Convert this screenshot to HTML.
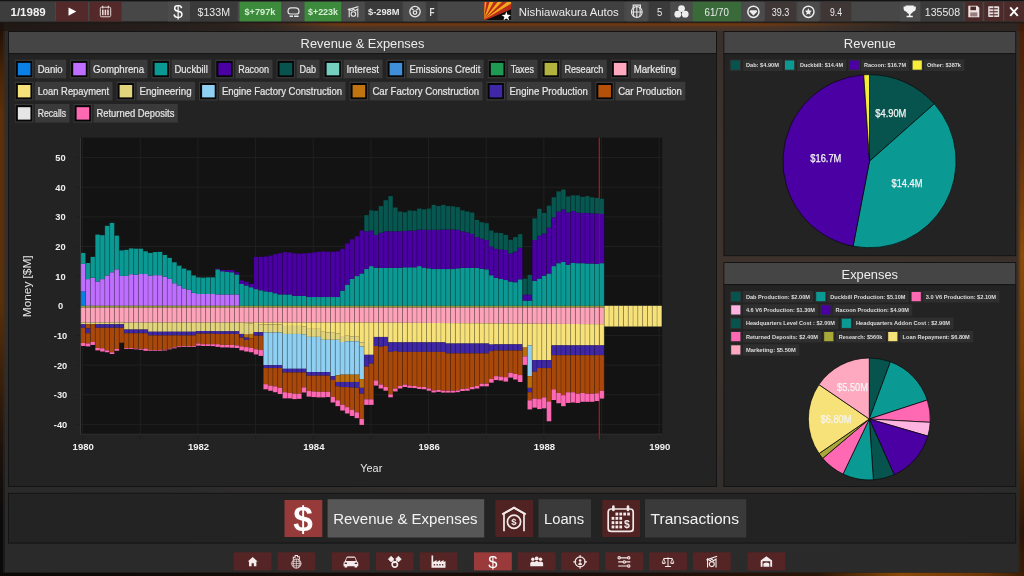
<!DOCTYPE html>
<html lang="en"><head><meta charset="utf-8"><title>Revenue &amp; Expenses</title>
<style>
html,body{margin:0;padding:0;background:#1a1208;overflow:hidden}
body{width:1024px;height:576px;font-family:'Liberation Sans', sans-serif}
svg{display:block;font-family:'Liberation Sans', sans-serif;will-change:transform;transform:translateZ(0)}
text{font-family:'Liberation Sans', sans-serif}
</style></head><body>
<svg width="1024" height="576" viewBox="0 0 1024 576">
<defs>
<radialGradient id="gFrame" gradientUnits="userSpaceOnUse" cx="0" cy="0" r="1" gradientTransform="translate(600,230) scale(900,380)">
<stop offset="0" stop-color="#3f332c"/><stop offset="0.5" stop-color="#3a302b"/><stop offset="0.68" stop-color="#332f2d"/><stop offset="0.82" stop-color="#2c2b2b"/><stop offset="1" stop-color="#2a2a2a"/>
</radialGradient>
<linearGradient id="gLeft" x1="0" y1="22" x2="0" y2="576" gradientUnits="userSpaceOnUse">
<stop offset="0" stop-color="#1c0e06"/><stop offset="0.1" stop-color="#4a2608"/><stop offset="0.17" stop-color="#5c300a"/><stop offset="0.5" stop-color="#5a300a"/><stop offset="0.77" stop-color="#1c120c"/><stop offset="0.9" stop-color="#0a0a0a"/><stop offset="1" stop-color="#0a0a0a"/>
</linearGradient>
<linearGradient id="gRight" x1="0" y1="22" x2="0" y2="576" gradientUnits="userSpaceOnUse">
<stop offset="0" stop-color="#4a1e08"/><stop offset="0.2" stop-color="#5e2e0a"/><stop offset="0.42" stop-color="#8a4a08"/><stop offset="0.7" stop-color="#6c3a04"/><stop offset="0.92" stop-color="#2a1406"/><stop offset="1" stop-color="#3a1c06"/>
</linearGradient>
<linearGradient id="gBot" x1="0" y1="0" x2="1024" y2="0" gradientUnits="userSpaceOnUse">
<stop offset="0" stop-color="#0a0908"/><stop offset="0.3" stop-color="#160c08"/><stop offset="0.6" stop-color="#1c0e08"/><stop offset="0.8" stop-color="#2a1608"/><stop offset="0.88" stop-color="#8a4a08"/><stop offset="0.96" stop-color="#6a3608"/><stop offset="1" stop-color="#3a1c06"/>
</linearGradient>
<linearGradient id="gTop" x1="0" y1="22" x2="0" y2="31" gradientUnits="userSpaceOnUse">
<stop offset="0" stop-color="#4a2206"/><stop offset="0.08" stop-color="#6e3a12"/><stop offset="0.36" stop-color="#693814"/><stop offset="0.55" stop-color="#4e3626" stop-opacity="0.95"/><stop offset="1" stop-color="#4a3428" stop-opacity="0.8"/>
</linearGradient>
<linearGradient id="gTopM" x1="0" y1="0" x2="1024" y2="0" gradientUnits="userSpaceOnUse">
<stop offset="0.18" stop-color="#fff" stop-opacity="0"/><stop offset="0.27" stop-color="#fff" stop-opacity="0.3"/><stop offset="0.335" stop-color="#fff" stop-opacity="1"/><stop offset="0.74" stop-color="#fff" stop-opacity="1"/><stop offset="0.81" stop-color="#fff" stop-opacity="0.5"/><stop offset="0.9" stop-color="#fff" stop-opacity="0"/>
</linearGradient>
<mask id="mTop" maskUnits="userSpaceOnUse" x="0" y="0" width="1024" height="40"><rect x="0" y="0" width="1024" height="40" fill="url(#gTopM)"/></mask>
<linearGradient id="gTL" x1="0" y1="0" x2="1024" y2="0" gradientUnits="userSpaceOnUse">
<stop offset="0" stop-color="#1c120e" stop-opacity="0.75"/><stop offset="0.22" stop-color="#1c120e" stop-opacity="0.45"/><stop offset="0.32" stop-color="#1c120e" stop-opacity="0"/><stop offset="0.8" stop-color="#1c120e" stop-opacity="0"/><stop offset="0.9" stop-color="#1c120e" stop-opacity="0.3"/><stop offset="1" stop-color="#2a1408" stop-opacity="0.3"/>
</linearGradient>
<linearGradient id="gShadow" x1="0" y1="0" x2="0" y2="1">
<stop offset="0" stop-color="#140a06" stop-opacity="0.95"/><stop offset="1" stop-color="#140a06" stop-opacity="0"/>
</linearGradient>
<linearGradient id="gEdgeL" x1="0" y1="0" x2="1" y2="0">
<stop offset="0" stop-color="#000" stop-opacity="0"/><stop offset="1" stop-color="#000" stop-opacity="0.0"/>
</linearGradient>
</defs>
<rect x="0" y="0" width="1024" height="576" fill="#0c0a08" />
<rect x="0" y="22" width="4" height="554" fill="url(#gLeft)" />
<rect x="1019.6" y="22" width="4.4" height="554" fill="url(#gRight)" />
<rect x="0" y="572.4" width="1024" height="3.6" fill="url(#gBot)" />
<rect x="3" y="22" width="1017.2" height="550.6" fill="url(#gFrame)" />
<rect x="2.5" y="22" width="2.5" height="550.6" fill="url(#gLeft)" opacity="0.45"/>
<rect x="1018.4" y="22" width="2.2" height="550.6" fill="url(#gRight)" opacity="0.5"/>
<rect x="0" y="22" width="1024" height="9" fill="url(#gTop)" mask="url(#mTop)"/>
<rect x="0" y="22" width="1024" height="9" fill="url(#gTL)"/>
<rect x="0" y="22" width="1024" height="2" fill="url(#gShadow)" opacity="0.6"/>
<rect x="300" y="22" width="560" height="3" fill="#5e2e10" opacity="0"/>
<rect x="0" y="0" width="1024" height="22.2" fill="#474747" />
<rect x="0" y="0" width="1024" height="1.4" fill="#141414" />
<rect x="0" y="21.4" width="1024" height="1.2" fill="#1c1a18" />
<rect x="0" y="1.8" width="55" height="19.6" fill="#3d3d3d" />
<text x="10.5" y="15.8" font-size="10.8" fill="#f2f2f2" text-anchor="start" font-weight="bold" textLength="35.3" lengthAdjust="spacingAndGlyphs" >1/1989</text>
<rect x="56" y="1.8" width="32" height="19.6" fill="#532929" />
<rect x="89.5" y="1.8" width="32" height="19.6" fill="#532929" />
<path d="M68.5 7.5 L76.3 11.6 L68.5 15.7 Z" fill="#fff"/>
<g fill="none" stroke="#e8d8d8" stroke-width="1"><rect x="100.3" y="7.2" width="10.4" height="9.6" rx="1.3"/><path d="M102.7 5.8v2.6M108.3 5.8v2.6" stroke-width="1.2"/></g>
<g fill="#e8d8d8"><rect x="102" y="9.6" width="1.6" height="5.6"/><rect x="104.6" y="9.6" width="1.6" height="5.6"/><rect x="107.2" y="9.6" width="1.6" height="5.6"/></g>
<rect x="168" y="1.8" width="22" height="19.6" fill="#4b4b4b" />
<text x="173.2" y="18.2" font-size="18.5" fill="#fff" text-anchor="start" font-weight="normal" textLength="9.6" lengthAdjust="spacingAndGlyphs" >$</text>
<rect x="190" y="1.8" width="47.5" height="19.6" fill="#3a3a3a" />
<text x="197.5" y="15.6" font-size="10.3" fill="#eaeaea" text-anchor="start" font-weight="normal" textLength="32.5" lengthAdjust="spacingAndGlyphs" >$133M</text>
<rect x="239.5" y="1.8" width="41.8" height="19.6" fill="#3c8a3c" />
<text x="244.5" y="14.9" font-size="9" fill="#d4efd4" text-anchor="start" font-weight="bold" textLength="31" lengthAdjust="spacingAndGlyphs" >$+797k</text>
<rect x="282.3" y="1.8" width="21.9" height="19.6" fill="#4b4b4b" />
<g fill="none" stroke="#e6e6e6" stroke-width="1.2"><path d="M288 11.6c0-2.600 1.600-3.800 3.200-3.800h4.200c2 0 3.600 1.400 3.600 3.600 0 1.600-1.200 2.600-2.600 2.600h-6.200c-1.400 0-2.200-1-2.200-2.400z"/><path d="M289.6 16.200h3.400M294 16.200h4.600" stroke-width="1.400"/></g>
<rect x="304.5" y="1.8" width="36.8" height="19.6" fill="#3c8a3c" />
<text x="308" y="14.9" font-size="9" fill="#d4efd4" text-anchor="start" font-weight="bold" textLength="30" lengthAdjust="spacingAndGlyphs" >$+223k</text>
<rect x="342.3" y="1.8" width="22.3" height="19.6" fill="#4b4b4b" />
<g fill="none" stroke="#e6e6e6" stroke-width="1.100"><path d="M349.2 17.200V9l2.400 1.800 1.800-1.800 1.800 1.800 2.600-1.800v8.200"/><path d="M347.8 9.800l10.600-3.200"/><circle cx="353.400" cy="14" r="2.300"/></g>
<rect x="365" y="1.8" width="37.5" height="19.6" fill="#3a3a3a" />
<text x="368" y="15.1" font-size="9.4" fill="#e6e6e6" text-anchor="start" font-weight="bold" textLength="31.5" lengthAdjust="spacingAndGlyphs" >$-298M</text>
<rect x="403.6" y="1.8" width="22" height="19.6" fill="#4b4b4b" />
<g fill="none" stroke="#e6e6e6" stroke-width="1.3"><circle cx="415" cy="11.6" r="5.2"/><circle cx="415" cy="12.6" r="1.8"/><path d="M411.5 8.4l2 1.6M418.5 8.4l-2 1.6"/></g>
<rect x="426.3" y="1.8" width="11.2" height="19.6" fill="#3a3a3a" />
<text x="429.6" y="15.6" font-size="10.6" fill="#e0e0e0" text-anchor="start" font-weight="bold" textLength="5" lengthAdjust="spacingAndGlyphs" >F</text>
<g><clipPath id="cf"><rect x="483.8" y="2" width="27.5" height="18"/></clipPath><g clip-path="url(#cf)"><rect x="483.8" y="2" width="27.5" height="18" fill="#0c0c0c"/><path d="M483.8 20 L483.8 2 L511.3 2 L511.3 6 Z" fill="#f2a81a"/><path d="M483.8 20 L486.5 2 L489.5 2 Z M483.8 20 L493.5 2 L497.5 2 Z M483.8 20 L502 2 L507 2 Z M483.8 20 L511.3 3.5 L511.3 8 Z" fill="#b82a1a"/><path d="M483.8 20 L483.8 2 L484.8 2 Z" fill="#b82a1a"/><path d="M483.8 20 L511.3 8.5 L511.3 20 Z" fill="#0c0c0c"/><path d="M483.8 20 L511.3 6.2 L511.3 9.2 L486 20 Z" fill="#b82a1a"/><path d="M506.3 11.5l1.2 3.3 3.5.1-2.8 2.1 1 3.4-2.9-2-2.9 2 1-3.4-2.8-2.1 3.5-.1z" fill="#fff"/></g></g>
<rect x="512.5" y="1.8" width="111.3" height="19.6" fill="#404040" />
<text x="518.8" y="15.6" font-size="11.3" fill="#eaeaea" text-anchor="start" font-weight="normal" textLength="100" lengthAdjust="spacingAndGlyphs" >Nishiawakura Autos</text>
<rect x="626.3" y="1.8" width="21.2" height="19.6" fill="#4b4b4b" />
<g fill="none" stroke="#e6e6e6" stroke-width="1.1"><circle cx="636.8" cy="12" r="5.4"/><path d="M631.4 12h10.8M636.8 6.6v10.8M634 7.2c-1 3-1 6.6 0 9.6M639.6 7.2c1 3 1 6.6 0 9.6"/><path d="M633.2 8.2v-3h7.2v3" stroke-width="1.2"/></g>
<rect x="648.8" y="1.8" width="21.2" height="19.6" fill="#3a3a3a" />
<text x="657" y="15.6" font-size="10.8" fill="#eaeaea" text-anchor="start" font-weight="normal" textLength="5.3" lengthAdjust="spacingAndGlyphs" >5</text>
<rect x="671" y="1.8" width="21" height="19.6" fill="#4b4b4b" />
<g fill="#eee"><circle cx="681.5" cy="8.6" r="3.4"/><circle cx="677.8" cy="14.2" r="3.4"/><circle cx="685.2" cy="14.2" r="3.4"/></g>
<rect x="692.5" y="1.8" width="48.8" height="19.6" fill="#3a6a3a" />
<text x="704.5" y="15.6" font-size="10.8" fill="#eaeaea" text-anchor="start" font-weight="normal" textLength="24.3" lengthAdjust="spacingAndGlyphs" >61/70</text>
<rect x="742.5" y="1.8" width="21.3" height="19.6" fill="#4b4b4b" />
<g fill="none" stroke="#eee" stroke-width="1.5"><circle cx="753.4" cy="11.8" r="5.6"/></g><path d="M750.4 10.2h6l1 1.4-4 3.8-4-3.8z" fill="#eee"/>
<rect x="765" y="1.8" width="31.3" height="19.6" fill="#3f3636" />
<text x="771.8" y="15.6" font-size="10.8" fill="#eaeaea" text-anchor="start" font-weight="normal" textLength="17.5" lengthAdjust="spacingAndGlyphs" >39.3</text>
<rect x="798" y="1.8" width="20.6" height="19.6" fill="#4b4b4b" />
<g fill="none" stroke="#eee" stroke-width="1.5"><circle cx="808.4" cy="11.8" r="5.6"/></g><path d="M808.4 8.3l1.05 2.2 2.4.3-1.75 1.65.45 2.4-2.15-1.2-2.15 1.2.45-2.4-1.75-1.65 2.4-.3z" fill="#eee"/>
<rect x="820.5" y="1.8" width="30.8" height="19.6" fill="#3f3636" />
<text x="830" y="15.6" font-size="10.8" fill="#eaeaea" text-anchor="start" font-weight="normal" textLength="12" lengthAdjust="spacingAndGlyphs" >9.4</text>
<rect x="900" y="1.8" width="20.5" height="19.6" fill="#4b4b4b" />
<path d="M905.6 5.6h8.2v1h2v2.2c0 1.6-1.2 2.6-2.6 2.8-.6 1.2-1.6 2-2.7 2.3v1.8h2.3v1.6h-6.2v-1.6h2.3v-1.8c-1.100-.3-2.100-1.100-2.700-2.300-1.400-.2-2.600-1.200-2.600-2.800v-2.200h2z" fill="#f2f2f2"/>
<rect x="920.5" y="1.8" width="43" height="19.6" fill="#3a3a3a" />
<text x="924.8" y="15.6" font-size="11.3" fill="#eaeaea" text-anchor="start" font-weight="normal" textLength="35.2" lengthAdjust="spacingAndGlyphs" >135508</text>
<rect x="964.8" y="1.8" width="17.7" height="19.6" fill="#4d2a2a" />
<rect x="984.3" y="1.8" width="18.7" height="19.6" fill="#4d2a2a" />
<rect x="1004.3" y="1.8" width="19.7" height="19.6" fill="#4d2a2a" />
<path d="M968.3 5.8h9l2 2v9.4h-11z" fill="#f0e4e4"/><rect x="970.4" y="6.6" width="5.6" height="3.6" fill="#4d2a2a"/><rect x="970.2" y="12.4" width="7.2" height="4" fill="#4d2a2a" opacity="0.55"/>
<g fill="#e9dcdc"><rect x="988.2" y="6.2" width="11" height="10.8" rx="0.8"/></g><g fill="#4d2a2a" opacity="0.8"><rect x="989.6" y="8" width="8.2" height="1.4"/><rect x="989.6" y="11" width="8.2" height="1.4"/><rect x="989.6" y="14" width="8.2" height="1.4"/><rect x="993.2" y="6.2" width="1" height="10.800"/></g>
<path d="M1010.2 7.3l7.600 8.600M1017.8 7.3l-7.600 8.600" stroke="#fff" stroke-width="1.9" fill="none"/>
<rect x="8" y="31" width="709" height="456" fill="#141414" />
<rect x="9" y="32" width="707" height="454" fill="#232323" />
<rect x="9" y="32" width="707" height="21" fill="#454545" />
<rect x="9" y="53" width="707" height="1.2" fill="#161616" />
<text x="362.5" y="47.6" font-size="13" fill="#ededed" text-anchor="middle" font-weight="normal" textLength="123.8" lengthAdjust="spacingAndGlyphs" >Revenue &amp; Expenses</text>
<rect x="723.4" y="31" width="292.8" height="225.2" fill="#141414" />
<rect x="724.4" y="32" width="290.8" height="223.2" fill="#232323" />
<rect x="724.4" y="32" width="290.8" height="21" fill="#454545" />
<rect x="724.4" y="53" width="290.8" height="1.2" fill="#161616" />
<text x="869.8" y="47.6" font-size="13" fill="#ededed" text-anchor="middle" font-weight="normal" textLength="52" lengthAdjust="spacingAndGlyphs" >Revenue</text>
<rect x="723.4" y="262" width="292.8" height="225" fill="#141414" />
<rect x="724.4" y="263" width="290.8" height="223" fill="#232323" />
<rect x="724.4" y="263" width="290.8" height="21" fill="#454545" />
<rect x="724.4" y="284" width="290.8" height="1.2" fill="#161616" />
<text x="869.8" y="278.6" font-size="13" fill="#ededed" text-anchor="middle" font-weight="normal" textLength="56.5" lengthAdjust="spacingAndGlyphs" >Expenses</text>
<rect x="8" y="492.8" width="1008.2" height="50.8" fill="#141414" />
<rect x="9" y="493.8" width="1006.2" height="48.8" fill="#232323" />
<rect x="14.85" y="59.7" width="18.6" height="18.6" fill="#3a3a3a" />
<rect x="15.75" y="60.9" width="16.4" height="16.2" fill="#060606" />
<rect x="17.85" y="62.9" width="12.6" height="12.4" fill="#0a7fe6" />
<rect x="34.85" y="59.7" width="31.25" height="18.6" fill="#3a3a3a" />
<text x="37.65" y="72.8" font-size="10.8" fill="#e6e6e6" text-anchor="start" font-weight="normal" textLength="25.05" lengthAdjust="spacingAndGlyphs" stroke="#e6e6e6" stroke-width="0.22">Danio</text>
<rect x="70.2" y="59.7" width="18.6" height="18.6" fill="#3a3a3a" />
<rect x="71.1" y="60.9" width="16.4" height="16.2" fill="#060606" />
<rect x="73.2" y="62.9" width="12.6" height="12.4" fill="#bf6fff" />
<rect x="90.2" y="59.7" width="57.3" height="18.6" fill="#3a3a3a" />
<text x="93" y="72.8" font-size="10.8" fill="#e6e6e6" text-anchor="start" font-weight="normal" textLength="51.1" lengthAdjust="spacingAndGlyphs" stroke="#e6e6e6" stroke-width="0.22">Gomphrena</text>
<rect x="151.6" y="59.7" width="18.6" height="18.6" fill="#3a3a3a" />
<rect x="152.5" y="60.9" width="16.4" height="16.2" fill="#060606" />
<rect x="154.6" y="62.9" width="12.6" height="12.4" fill="#0b9994" />
<rect x="171.6" y="59.7" width="39.65" height="18.6" fill="#3a3a3a" />
<text x="174.4" y="72.8" font-size="10.8" fill="#e6e6e6" text-anchor="start" font-weight="normal" textLength="33.45" lengthAdjust="spacingAndGlyphs" stroke="#e6e6e6" stroke-width="0.22">Duckbill</text>
<rect x="215.35" y="59.7" width="18.6" height="18.6" fill="#3a3a3a" />
<rect x="216.25" y="60.9" width="16.4" height="16.2" fill="#060606" />
<rect x="218.35" y="62.9" width="12.6" height="12.4" fill="#4a00a2" />
<rect x="235.35" y="59.7" width="37.15" height="18.6" fill="#3a3a3a" />
<text x="238.15" y="72.8" font-size="10.8" fill="#e6e6e6" text-anchor="start" font-weight="normal" textLength="30.95" lengthAdjust="spacingAndGlyphs" stroke="#e6e6e6" stroke-width="0.22">Racoon</text>
<rect x="276.6" y="59.7" width="18.6" height="18.6" fill="#3a3a3a" />
<rect x="277.5" y="60.9" width="16.4" height="16.2" fill="#060606" />
<rect x="279.6" y="62.9" width="12.6" height="12.4" fill="#07544e" />
<rect x="296.6" y="59.7" width="22.9" height="18.6" fill="#3a3a3a" />
<text x="299.4" y="72.8" font-size="10.8" fill="#e6e6e6" text-anchor="start" font-weight="normal" textLength="16.7" lengthAdjust="spacingAndGlyphs" stroke="#e6e6e6" stroke-width="0.22">Dab</text>
<rect x="323.6" y="59.7" width="18.6" height="18.6" fill="#3a3a3a" />
<rect x="324.5" y="60.9" width="16.4" height="16.2" fill="#060606" />
<rect x="326.6" y="62.9" width="12.6" height="12.4" fill="#74cfbf" />
<rect x="343.6" y="59.7" width="38.9" height="18.6" fill="#3a3a3a" />
<text x="346.4" y="72.8" font-size="10.8" fill="#e6e6e6" text-anchor="start" font-weight="normal" textLength="32.7" lengthAdjust="spacingAndGlyphs" stroke="#e6e6e6" stroke-width="0.22">Interest</text>
<rect x="386.6" y="59.7" width="18.6" height="18.6" fill="#3a3a3a" />
<rect x="387.5" y="60.9" width="16.4" height="16.2" fill="#060606" />
<rect x="389.6" y="62.9" width="12.6" height="12.4" fill="#3f8fd8" />
<rect x="406.6" y="59.7" width="77.15" height="18.6" fill="#3a3a3a" />
<text x="409.4" y="72.8" font-size="10.8" fill="#e6e6e6" text-anchor="start" font-weight="normal" textLength="70.95" lengthAdjust="spacingAndGlyphs" stroke="#e6e6e6" stroke-width="0.22">Emissions Credit</text>
<rect x="487.85" y="59.7" width="18.6" height="18.6" fill="#3a3a3a" />
<rect x="488.75" y="60.9" width="16.4" height="16.2" fill="#060606" />
<rect x="490.85" y="62.9" width="12.6" height="12.4" fill="#1f9a52" />
<rect x="507.85" y="59.7" width="29.65" height="18.6" fill="#3a3a3a" />
<text x="510.65" y="72.8" font-size="10.8" fill="#e6e6e6" text-anchor="start" font-weight="normal" textLength="23.45" lengthAdjust="spacingAndGlyphs" stroke="#e6e6e6" stroke-width="0.22">Taxes</text>
<rect x="541.6" y="59.7" width="18.6" height="18.6" fill="#3a3a3a" />
<rect x="542.5" y="60.9" width="16.4" height="16.2" fill="#060606" />
<rect x="544.6" y="62.9" width="12.6" height="12.4" fill="#b2b23e" />
<rect x="561.6" y="59.7" width="45.15" height="18.6" fill="#3a3a3a" />
<text x="564.4" y="72.8" font-size="10.8" fill="#e6e6e6" text-anchor="start" font-weight="normal" textLength="38.95" lengthAdjust="spacingAndGlyphs" stroke="#e6e6e6" stroke-width="0.22">Research</text>
<rect x="610.85" y="59.7" width="18.6" height="18.6" fill="#3a3a3a" />
<rect x="611.75" y="60.9" width="16.4" height="16.2" fill="#060606" />
<rect x="613.85" y="62.9" width="12.6" height="12.4" fill="#ffa9c0" />
<rect x="630.85" y="59.7" width="48.75" height="18.6" fill="#3a3a3a" />
<text x="633.65" y="72.8" font-size="10.8" fill="#e6e6e6" text-anchor="start" font-weight="normal" textLength="42.55" lengthAdjust="spacingAndGlyphs" stroke="#e6e6e6" stroke-width="0.22">Marketing</text>
<rect x="14.85" y="81.8" width="18.6" height="18.6" fill="#3a3a3a" />
<rect x="15.75" y="83" width="16.4" height="16.2" fill="#060606" />
<rect x="17.85" y="85" width="12.6" height="12.4" fill="#f7e27a" />
<rect x="34.85" y="81.8" width="77.65" height="18.6" fill="#3a3a3a" />
<text x="37.65" y="94.9" font-size="10.8" fill="#e6e6e6" text-anchor="start" font-weight="normal" textLength="71.45" lengthAdjust="spacingAndGlyphs" stroke="#e6e6e6" stroke-width="0.22">Loan Repayment</text>
<rect x="116.6" y="81.8" width="18.6" height="18.6" fill="#3a3a3a" />
<rect x="117.5" y="83" width="16.4" height="16.2" fill="#060606" />
<rect x="119.6" y="85" width="12.6" height="12.4" fill="#e2d47c" />
<rect x="136.6" y="81.8" width="58.4" height="18.6" fill="#3a3a3a" />
<text x="139.4" y="94.9" font-size="10.8" fill="#e6e6e6" text-anchor="start" font-weight="normal" textLength="52.2" lengthAdjust="spacingAndGlyphs" stroke="#e6e6e6" stroke-width="0.22">Engineering</text>
<rect x="199.1" y="81.8" width="18.6" height="18.6" fill="#3a3a3a" />
<rect x="200" y="83" width="16.4" height="16.2" fill="#060606" />
<rect x="202.1" y="85" width="12.6" height="12.4" fill="#8fd0f2" />
<rect x="219.1" y="81.8" width="126.4" height="18.6" fill="#3a3a3a" />
<text x="221.9" y="94.9" font-size="10.8" fill="#e6e6e6" text-anchor="start" font-weight="normal" textLength="120.2" lengthAdjust="spacingAndGlyphs" stroke="#e6e6e6" stroke-width="0.22">Engine Factory Construction</text>
<rect x="349.6" y="81.8" width="18.6" height="18.6" fill="#3a3a3a" />
<rect x="350.5" y="83" width="16.4" height="16.2" fill="#060606" />
<rect x="352.6" y="85" width="12.6" height="12.4" fill="#bf7410" />
<rect x="369.6" y="81.8" width="112.9" height="18.6" fill="#3a3a3a" />
<text x="372.4" y="94.9" font-size="10.8" fill="#e6e6e6" text-anchor="start" font-weight="normal" textLength="106.7" lengthAdjust="spacingAndGlyphs" stroke="#e6e6e6" stroke-width="0.22">Car Factory Construction</text>
<rect x="486.6" y="81.8" width="18.6" height="18.6" fill="#3a3a3a" />
<rect x="487.5" y="83" width="16.4" height="16.2" fill="#060606" />
<rect x="489.6" y="85" width="12.6" height="12.4" fill="#3f27a5" />
<rect x="506.6" y="81.8" width="84.65" height="18.6" fill="#3a3a3a" />
<text x="509.4" y="94.9" font-size="10.8" fill="#e6e6e6" text-anchor="start" font-weight="normal" textLength="78.45" lengthAdjust="spacingAndGlyphs" stroke="#e6e6e6" stroke-width="0.22">Engine Production</text>
<rect x="595.35" y="81.8" width="18.6" height="18.6" fill="#3a3a3a" />
<rect x="596.25" y="83" width="16.4" height="16.2" fill="#060606" />
<rect x="598.35" y="85" width="12.6" height="12.4" fill="#b4500a" />
<rect x="615.35" y="81.8" width="69.95" height="18.6" fill="#3a3a3a" />
<text x="618.15" y="94.9" font-size="10.8" fill="#e6e6e6" text-anchor="start" font-weight="normal" textLength="63.75" lengthAdjust="spacingAndGlyphs" stroke="#e6e6e6" stroke-width="0.22">Car Production</text>
<rect x="14.85" y="104" width="18.6" height="18.6" fill="#3a3a3a" />
<rect x="15.75" y="105.2" width="16.4" height="16.2" fill="#060606" />
<rect x="17.85" y="107.2" width="12.6" height="12.4" fill="#e6e6e6" />
<rect x="34.85" y="104" width="34.65" height="18.6" fill="#3a3a3a" />
<text x="37.65" y="117.1" font-size="10.8" fill="#e6e6e6" text-anchor="start" font-weight="normal" textLength="28.45" lengthAdjust="spacingAndGlyphs" stroke="#e6e6e6" stroke-width="0.22">Recalls</text>
<rect x="73.6" y="104" width="18.6" height="18.6" fill="#3a3a3a" />
<rect x="74.5" y="105.2" width="16.4" height="16.2" fill="#060606" />
<rect x="76.6" y="107.2" width="12.6" height="12.4" fill="#ff69b4" />
<rect x="93.6" y="104" width="84.2" height="18.6" fill="#3a3a3a" />
<text x="96.4" y="117.1" font-size="10.8" fill="#e6e6e6" text-anchor="start" font-weight="normal" textLength="78" lengthAdjust="spacingAndGlyphs" stroke="#e6e6e6" stroke-width="0.22">Returned Deposits</text>
<rect x="80.6" y="137.7" width="581.6" height="296.7" fill="#131313" />
<rect x="82.1" y="137.7" width="1" height="302.7" fill="#202020" />
<rect x="139.76" y="137.7" width="1" height="302.7" fill="#202020" />
<rect x="197.42" y="137.7" width="1" height="302.7" fill="#202020" />
<rect x="255.08" y="137.7" width="1" height="302.7" fill="#202020" />
<rect x="312.74" y="137.7" width="1" height="302.7" fill="#202020" />
<rect x="370.4" y="137.7" width="1" height="302.7" fill="#202020" />
<rect x="428.06" y="137.7" width="1" height="302.7" fill="#202020" />
<rect x="485.72" y="137.7" width="1" height="302.7" fill="#202020" />
<rect x="543.38" y="137.7" width="1" height="302.7" fill="#202020" />
<rect x="601.04" y="137.7" width="1" height="302.7" fill="#202020" />
<rect x="658.7" y="137.7" width="1" height="302.7" fill="#202020" />
<rect x="75.6" y="423.9" width="586.6" height="1" fill="#202020" />
<rect x="75.6" y="394.25" width="586.6" height="1" fill="#202020" />
<rect x="75.6" y="364.6" width="586.6" height="1" fill="#202020" />
<rect x="75.6" y="334.95" width="586.6" height="1" fill="#202020" />
<rect x="75.6" y="305.3" width="586.6" height="1" fill="#202020" />
<rect x="75.6" y="275.65" width="586.6" height="1" fill="#202020" />
<rect x="75.6" y="246" width="586.6" height="1" fill="#202020" />
<rect x="75.6" y="216.35" width="586.6" height="1" fill="#202020" />
<rect x="75.6" y="186.7" width="586.6" height="1" fill="#202020" />
<rect x="75.6" y="157.05" width="586.6" height="1" fill="#202020" />
<rect x="80" y="137.7" width="1" height="296.7" fill="#363636" />
<rect x="80" y="433.7" width="582.2" height="1" fill="#303030" />
<rect x="598.8" y="137.7" width="1" height="301.7" fill="#b01616" />
<rect x="80.80" y="291.29" width="4.802" height="14.51" fill="#0a7fe6"/>
<rect x="80.80" y="263.90" width="4.802" height="27.39" fill="#bf6fff"/>
<rect x="80.80" y="252.92" width="4.802" height="10.99" fill="#0b9994"/>
<rect x="80.80" y="305.80" width="4.802" height="1.80" fill="#8f9a3c"/>
<rect x="80.80" y="307.60" width="4.802" height="14.90" fill="#fca2b9"/>
<rect x="80.80" y="322.50" width="4.802" height="1.78" fill="#e2d47c"/>
<rect x="80.80" y="324.28" width="4.802" height="3.52" fill="#3f27a5"/>
<rect x="80.80" y="327.79" width="4.802" height="15.23" fill="#a8480a"/>
<rect x="80.80" y="343.02" width="4.802" height="2.93" fill="#ff69b4"/>
<rect x="85.60" y="279.14" width="4.802" height="26.66" fill="#bf6fff"/>
<rect x="85.60" y="263.02" width="4.802" height="16.11" fill="#0b9994"/>
<rect x="85.60" y="305.80" width="4.802" height="1.80" fill="#8f9a3c"/>
<rect x="85.60" y="307.60" width="4.802" height="14.90" fill="#fca2b9"/>
<rect x="85.60" y="322.50" width="4.802" height="1.78" fill="#e2d47c"/>
<rect x="85.60" y="324.28" width="4.802" height="4.10" fill="#a8480a"/>
<rect x="85.60" y="328.38" width="4.802" height="4.83" fill="#3f27a5"/>
<rect x="85.60" y="333.21" width="4.802" height="10.25" fill="#a8480a"/>
<rect x="85.60" y="343.46" width="4.802" height="2.93" fill="#ff69b4"/>
<rect x="90.40" y="277.67" width="4.802" height="28.13" fill="#bf6fff"/>
<rect x="90.40" y="256.87" width="4.802" height="20.80" fill="#0b9994"/>
<rect x="90.40" y="305.80" width="4.802" height="1.80" fill="#8f9a3c"/>
<rect x="90.40" y="307.60" width="4.802" height="14.90" fill="#fca2b9"/>
<rect x="90.40" y="322.50" width="4.802" height="1.78" fill="#e2d47c"/>
<rect x="90.40" y="324.28" width="4.802" height="17.72" fill="#a8480a"/>
<rect x="90.40" y="342.00" width="4.802" height="2.93" fill="#ff69b4"/>
<rect x="95.21" y="281.48" width="4.802" height="24.32" fill="#bf6fff"/>
<rect x="95.21" y="234.61" width="4.802" height="46.87" fill="#0b9994"/>
<rect x="95.21" y="305.80" width="4.802" height="1.80" fill="#8f9a3c"/>
<rect x="95.21" y="307.60" width="4.802" height="14.90" fill="#fca2b9"/>
<rect x="95.21" y="322.50" width="4.802" height="1.78" fill="#e2d47c"/>
<rect x="95.21" y="324.28" width="4.802" height="3.52" fill="#3f27a5"/>
<rect x="95.21" y="327.79" width="4.802" height="20.07" fill="#a8480a"/>
<rect x="95.21" y="347.86" width="4.802" height="2.49" fill="#ff69b4"/>
<rect x="100.01" y="279.14" width="4.802" height="26.66" fill="#bf6fff"/>
<rect x="100.01" y="235.19" width="4.802" height="43.94" fill="#0b9994"/>
<rect x="100.01" y="305.80" width="4.802" height="1.80" fill="#8f9a3c"/>
<rect x="100.01" y="307.60" width="4.802" height="14.90" fill="#fca2b9"/>
<rect x="100.01" y="322.50" width="4.802" height="1.78" fill="#e2d47c"/>
<rect x="100.01" y="324.28" width="4.802" height="3.52" fill="#3f27a5"/>
<rect x="100.01" y="327.79" width="4.802" height="20.51" fill="#a8480a"/>
<rect x="100.01" y="348.30" width="4.802" height="3.22" fill="#ff69b4"/>
<rect x="104.81" y="275.48" width="4.802" height="30.32" fill="#bf6fff"/>
<rect x="104.81" y="225.82" width="4.802" height="49.66" fill="#0b9994"/>
<rect x="104.81" y="305.80" width="4.802" height="1.80" fill="#8f9a3c"/>
<rect x="104.81" y="307.60" width="4.802" height="14.90" fill="#fca2b9"/>
<rect x="104.81" y="322.50" width="4.802" height="1.78" fill="#e2d47c"/>
<rect x="104.81" y="324.28" width="4.802" height="3.52" fill="#3f27a5"/>
<rect x="104.81" y="327.79" width="4.802" height="22.56" fill="#a8480a"/>
<rect x="104.81" y="350.35" width="4.802" height="1.90" fill="#ff69b4"/>
<rect x="109.61" y="272.25" width="4.802" height="33.55" fill="#bf6fff"/>
<rect x="109.61" y="222.89" width="4.802" height="49.36" fill="#0b9994"/>
<rect x="109.61" y="305.80" width="4.802" height="1.80" fill="#8f9a3c"/>
<rect x="109.61" y="307.60" width="4.802" height="14.90" fill="#fca2b9"/>
<rect x="109.61" y="322.50" width="4.802" height="1.78" fill="#e2d47c"/>
<rect x="109.61" y="324.28" width="4.802" height="3.52" fill="#3f27a5"/>
<rect x="109.61" y="327.79" width="4.802" height="24.46" fill="#a8480a"/>
<rect x="109.61" y="352.25" width="4.802" height="1.76" fill="#ff69b4"/>
<rect x="114.41" y="269.32" width="4.802" height="36.48" fill="#bf6fff"/>
<rect x="114.41" y="235.63" width="4.802" height="33.69" fill="#0b9994"/>
<rect x="114.41" y="305.80" width="4.802" height="1.80" fill="#8f9a3c"/>
<rect x="114.41" y="307.60" width="4.802" height="14.90" fill="#fca2b9"/>
<rect x="114.41" y="322.50" width="4.802" height="1.78" fill="#e2d47c"/>
<rect x="114.41" y="324.28" width="4.802" height="3.52" fill="#3f27a5"/>
<rect x="114.41" y="327.79" width="4.802" height="21.24" fill="#a8480a"/>
<rect x="114.41" y="349.03" width="4.802" height="1.76" fill="#ff69b4"/>
<rect x="119.22" y="275.91" width="4.802" height="29.89" fill="#bf6fff"/>
<rect x="119.22" y="250.43" width="4.802" height="25.49" fill="#0b9994"/>
<rect x="119.22" y="305.80" width="4.802" height="1.80" fill="#8f9a3c"/>
<rect x="119.22" y="307.60" width="4.802" height="14.90" fill="#fca2b9"/>
<rect x="119.22" y="322.50" width="4.802" height="1.78" fill="#e2d47c"/>
<rect x="119.22" y="324.28" width="4.802" height="3.52" fill="#3f27a5"/>
<rect x="119.22" y="327.79" width="4.802" height="14.94" fill="#a8480a"/>
<rect x="124.02" y="275.91" width="4.802" height="29.89" fill="#bf6fff"/>
<rect x="124.02" y="249.84" width="4.802" height="26.07" fill="#0b9994"/>
<rect x="124.02" y="305.80" width="4.802" height="1.80" fill="#8f9a3c"/>
<rect x="124.02" y="307.60" width="4.802" height="14.90" fill="#fca2b9"/>
<rect x="124.02" y="322.50" width="4.802" height="7.05" fill="#e2d47c"/>
<rect x="124.02" y="329.55" width="4.802" height="3.66" fill="#3f27a5"/>
<rect x="124.02" y="333.21" width="4.802" height="14.94" fill="#a8480a"/>
<rect x="124.02" y="348.15" width="4.802" height="0.88" fill="#ff69b4"/>
<rect x="128.82" y="274.16" width="4.802" height="31.64" fill="#bf6fff"/>
<rect x="128.82" y="248.38" width="4.802" height="25.78" fill="#0b9994"/>
<rect x="128.82" y="305.80" width="4.802" height="1.80" fill="#8f9a3c"/>
<rect x="128.82" y="307.60" width="4.802" height="14.90" fill="#fca2b9"/>
<rect x="128.82" y="322.50" width="4.802" height="7.05" fill="#e2d47c"/>
<rect x="128.82" y="329.55" width="4.802" height="3.66" fill="#3f27a5"/>
<rect x="128.82" y="333.21" width="4.802" height="14.94" fill="#a8480a"/>
<rect x="128.82" y="348.15" width="4.802" height="0.88" fill="#ff69b4"/>
<rect x="133.62" y="274.74" width="4.802" height="31.06" fill="#bf6fff"/>
<rect x="133.62" y="248.67" width="4.802" height="26.07" fill="#0b9994"/>
<rect x="133.62" y="305.80" width="4.802" height="1.80" fill="#8f9a3c"/>
<rect x="133.62" y="307.60" width="4.802" height="14.90" fill="#fca2b9"/>
<rect x="133.62" y="322.50" width="4.802" height="7.05" fill="#e2d47c"/>
<rect x="133.62" y="329.55" width="4.802" height="3.66" fill="#3f27a5"/>
<rect x="133.62" y="333.21" width="4.802" height="15.38" fill="#a8480a"/>
<rect x="133.62" y="348.59" width="4.802" height="0.73" fill="#ff69b4"/>
<rect x="138.42" y="274.01" width="4.802" height="31.79" fill="#bf6fff"/>
<rect x="138.42" y="248.67" width="4.802" height="25.34" fill="#0b9994"/>
<rect x="138.42" y="305.80" width="4.802" height="1.80" fill="#8f9a3c"/>
<rect x="138.42" y="307.60" width="4.802" height="14.90" fill="#fca2b9"/>
<rect x="138.42" y="322.50" width="4.802" height="7.05" fill="#e2d47c"/>
<rect x="138.42" y="329.55" width="4.802" height="3.66" fill="#3f27a5"/>
<rect x="138.42" y="333.21" width="4.802" height="15.67" fill="#a8480a"/>
<rect x="138.42" y="348.88" width="4.802" height="0.88" fill="#ff69b4"/>
<rect x="143.23" y="274.01" width="4.802" height="31.79" fill="#bf6fff"/>
<rect x="143.23" y="251.31" width="4.802" height="22.70" fill="#0b9994"/>
<rect x="143.23" y="305.80" width="4.802" height="1.80" fill="#8f9a3c"/>
<rect x="143.23" y="307.60" width="4.802" height="14.90" fill="#fca2b9"/>
<rect x="143.23" y="322.50" width="4.802" height="7.05" fill="#e2d47c"/>
<rect x="143.23" y="329.55" width="4.802" height="3.66" fill="#3f27a5"/>
<rect x="143.23" y="333.21" width="4.802" height="15.38" fill="#a8480a"/>
<rect x="143.23" y="348.59" width="4.802" height="2.20" fill="#ff69b4"/>
<rect x="148.03" y="275.62" width="4.802" height="30.18" fill="#bf6fff"/>
<rect x="148.03" y="252.92" width="4.802" height="22.70" fill="#0b9994"/>
<rect x="148.03" y="305.80" width="4.802" height="1.80" fill="#8f9a3c"/>
<rect x="148.03" y="307.60" width="4.802" height="14.90" fill="#fca2b9"/>
<rect x="148.03" y="322.50" width="4.802" height="9.25" fill="#e2d47c"/>
<rect x="148.03" y="331.75" width="4.802" height="3.66" fill="#3f27a5"/>
<rect x="148.03" y="335.41" width="4.802" height="14.65" fill="#a8480a"/>
<rect x="148.03" y="350.06" width="4.802" height="0.73" fill="#ff69b4"/>
<rect x="152.83" y="275.18" width="4.802" height="30.62" fill="#bf6fff"/>
<rect x="152.83" y="252.04" width="4.802" height="23.14" fill="#0b9994"/>
<rect x="152.83" y="305.80" width="4.802" height="1.80" fill="#8f9a3c"/>
<rect x="152.83" y="307.60" width="4.802" height="14.90" fill="#fca2b9"/>
<rect x="152.83" y="322.50" width="4.802" height="9.25" fill="#e2d47c"/>
<rect x="152.83" y="331.75" width="4.802" height="3.66" fill="#3f27a5"/>
<rect x="152.83" y="335.41" width="4.802" height="14.65" fill="#a8480a"/>
<rect x="152.83" y="350.06" width="4.802" height="0.73" fill="#ff69b4"/>
<rect x="157.63" y="275.18" width="4.802" height="30.62" fill="#bf6fff"/>
<rect x="157.63" y="251.89" width="4.802" height="23.29" fill="#0b9994"/>
<rect x="157.63" y="305.80" width="4.802" height="1.80" fill="#8f9a3c"/>
<rect x="157.63" y="307.60" width="4.802" height="14.90" fill="#fca2b9"/>
<rect x="157.63" y="322.50" width="4.802" height="9.25" fill="#e2d47c"/>
<rect x="157.63" y="331.75" width="4.802" height="3.66" fill="#3f27a5"/>
<rect x="157.63" y="335.41" width="4.802" height="14.65" fill="#a8480a"/>
<rect x="157.63" y="350.06" width="4.802" height="0.73" fill="#ff69b4"/>
<rect x="162.43" y="276.65" width="4.802" height="29.15" fill="#bf6fff"/>
<rect x="162.43" y="254.97" width="4.802" height="21.68" fill="#0b9994"/>
<rect x="162.43" y="305.80" width="4.802" height="1.80" fill="#8f9a3c"/>
<rect x="162.43" y="307.60" width="4.802" height="14.90" fill="#fca2b9"/>
<rect x="162.43" y="322.50" width="4.802" height="9.25" fill="#e2d47c"/>
<rect x="162.43" y="331.75" width="4.802" height="3.66" fill="#3f27a5"/>
<rect x="162.43" y="335.41" width="4.802" height="14.35" fill="#a8480a"/>
<rect x="162.43" y="349.76" width="4.802" height="0.73" fill="#ff69b4"/>
<rect x="167.24" y="278.84" width="4.802" height="26.96" fill="#bf6fff"/>
<rect x="167.24" y="257.90" width="4.802" height="20.95" fill="#0b9994"/>
<rect x="167.24" y="305.80" width="4.802" height="1.80" fill="#8f9a3c"/>
<rect x="167.24" y="307.60" width="4.802" height="14.90" fill="#fca2b9"/>
<rect x="167.24" y="322.50" width="4.802" height="9.25" fill="#e2d47c"/>
<rect x="167.24" y="331.75" width="4.802" height="3.66" fill="#3f27a5"/>
<rect x="167.24" y="335.41" width="4.802" height="13.18" fill="#a8480a"/>
<rect x="167.24" y="348.59" width="4.802" height="0.73" fill="#ff69b4"/>
<rect x="172.04" y="283.24" width="4.802" height="22.56" fill="#bf6fff"/>
<rect x="172.04" y="262.29" width="4.802" height="20.95" fill="#0b9994"/>
<rect x="172.04" y="305.80" width="4.802" height="1.80" fill="#8f9a3c"/>
<rect x="172.04" y="307.60" width="4.802" height="14.90" fill="#fca2b9"/>
<rect x="172.04" y="322.50" width="4.802" height="9.25" fill="#e2d47c"/>
<rect x="172.04" y="331.75" width="4.802" height="3.66" fill="#3f27a5"/>
<rect x="172.04" y="335.41" width="4.802" height="12.01" fill="#a8480a"/>
<rect x="172.04" y="347.42" width="4.802" height="0.88" fill="#ff69b4"/>
<rect x="176.84" y="285.44" width="4.802" height="20.36" fill="#bf6fff"/>
<rect x="176.84" y="265.66" width="4.802" height="19.77" fill="#0b9994"/>
<rect x="176.84" y="305.80" width="4.802" height="1.80" fill="#8f9a3c"/>
<rect x="176.84" y="307.60" width="4.802" height="14.90" fill="#fca2b9"/>
<rect x="176.84" y="322.50" width="4.802" height="9.25" fill="#e2d47c"/>
<rect x="176.84" y="331.75" width="4.802" height="3.66" fill="#3f27a5"/>
<rect x="176.84" y="335.41" width="4.802" height="10.84" fill="#a8480a"/>
<rect x="176.84" y="346.25" width="4.802" height="0.88" fill="#ff69b4"/>
<rect x="181.64" y="288.37" width="4.802" height="17.43" fill="#bf6fff"/>
<rect x="181.64" y="268.59" width="4.802" height="19.77" fill="#0b9994"/>
<rect x="181.64" y="305.80" width="4.802" height="1.80" fill="#8f9a3c"/>
<rect x="181.64" y="307.60" width="4.802" height="14.90" fill="#fca2b9"/>
<rect x="181.64" y="322.50" width="4.802" height="9.25" fill="#e2d47c"/>
<rect x="181.64" y="331.75" width="4.802" height="3.66" fill="#3f27a5"/>
<rect x="181.64" y="335.41" width="4.802" height="10.55" fill="#a8480a"/>
<rect x="181.64" y="345.95" width="4.802" height="0.88" fill="#ff69b4"/>
<rect x="186.44" y="289.83" width="4.802" height="15.97" fill="#bf6fff"/>
<rect x="186.44" y="270.35" width="4.802" height="19.48" fill="#0b9994"/>
<rect x="186.44" y="305.80" width="4.802" height="1.80" fill="#8f9a3c"/>
<rect x="186.44" y="307.60" width="4.802" height="14.90" fill="#fca2b9"/>
<rect x="186.44" y="322.50" width="4.802" height="9.25" fill="#e2d47c"/>
<rect x="186.44" y="331.75" width="4.802" height="3.66" fill="#3f27a5"/>
<rect x="186.44" y="335.41" width="4.802" height="10.55" fill="#a8480a"/>
<rect x="186.44" y="345.95" width="4.802" height="0.88" fill="#ff69b4"/>
<rect x="191.25" y="292.76" width="4.802" height="13.04" fill="#bf6fff"/>
<rect x="191.25" y="275.48" width="4.802" height="17.28" fill="#0b9994"/>
<rect x="191.25" y="305.80" width="4.802" height="1.80" fill="#8f9a3c"/>
<rect x="191.25" y="307.60" width="4.802" height="14.90" fill="#fca2b9"/>
<rect x="191.25" y="322.50" width="4.802" height="9.25" fill="#e2d47c"/>
<rect x="191.25" y="331.75" width="4.802" height="3.66" fill="#3f27a5"/>
<rect x="191.25" y="335.41" width="4.802" height="10.55" fill="#a8480a"/>
<rect x="191.25" y="345.95" width="4.802" height="0.88" fill="#ff69b4"/>
<rect x="196.05" y="294.00" width="4.802" height="11.80" fill="#bf6fff"/>
<rect x="196.05" y="277.38" width="4.802" height="16.62" fill="#0b9994"/>
<rect x="196.05" y="305.80" width="4.802" height="1.80" fill="#8f9a3c"/>
<rect x="196.05" y="307.60" width="4.802" height="14.90" fill="#fca2b9"/>
<rect x="196.05" y="322.50" width="4.802" height="8.51" fill="#e2d47c"/>
<rect x="196.05" y="331.01" width="4.802" height="2.64" fill="#3f27a5"/>
<rect x="196.05" y="333.65" width="4.802" height="9.81" fill="#a8480a"/>
<rect x="196.05" y="343.46" width="4.802" height="2.20" fill="#ff69b4"/>
<rect x="200.85" y="294.00" width="4.802" height="11.80" fill="#bf6fff"/>
<rect x="200.85" y="277.67" width="4.802" height="16.33" fill="#0b9994"/>
<rect x="200.85" y="305.80" width="4.802" height="1.80" fill="#8f9a3c"/>
<rect x="200.85" y="307.60" width="4.802" height="14.90" fill="#fca2b9"/>
<rect x="200.85" y="322.50" width="4.802" height="8.51" fill="#e2d47c"/>
<rect x="200.85" y="331.01" width="4.802" height="2.64" fill="#3f27a5"/>
<rect x="200.85" y="333.65" width="4.802" height="10.55" fill="#a8480a"/>
<rect x="200.85" y="344.20" width="4.802" height="1.76" fill="#ff69b4"/>
<rect x="205.65" y="294.00" width="4.802" height="11.80" fill="#bf6fff"/>
<rect x="205.65" y="277.38" width="4.802" height="16.62" fill="#0b9994"/>
<rect x="205.65" y="305.80" width="4.802" height="1.80" fill="#8f9a3c"/>
<rect x="205.65" y="307.60" width="4.802" height="14.90" fill="#fca2b9"/>
<rect x="205.65" y="322.50" width="4.802" height="8.51" fill="#e2d47c"/>
<rect x="205.65" y="331.01" width="4.802" height="2.64" fill="#3f27a5"/>
<rect x="205.65" y="333.65" width="4.802" height="10.55" fill="#a8480a"/>
<rect x="205.65" y="344.20" width="4.802" height="1.76" fill="#ff69b4"/>
<rect x="210.45" y="294.00" width="4.802" height="11.80" fill="#bf6fff"/>
<rect x="210.45" y="277.38" width="4.802" height="16.62" fill="#0b9994"/>
<rect x="210.45" y="305.80" width="4.802" height="1.80" fill="#8f9a3c"/>
<rect x="210.45" y="307.60" width="4.802" height="14.90" fill="#fca2b9"/>
<rect x="210.45" y="322.50" width="4.802" height="8.51" fill="#e2d47c"/>
<rect x="210.45" y="331.01" width="4.802" height="2.64" fill="#3f27a5"/>
<rect x="210.45" y="333.65" width="4.802" height="10.55" fill="#a8480a"/>
<rect x="210.45" y="344.20" width="4.802" height="1.90" fill="#ff69b4"/>
<rect x="215.26" y="294.40" width="4.802" height="11.40" fill="#bf6fff"/>
<rect x="215.26" y="269.32" width="4.802" height="25.08" fill="#0b9994"/>
<rect x="215.26" y="268.59" width="4.802" height="0.73" fill="#4a00a2"/>
<rect x="215.26" y="305.80" width="4.802" height="1.80" fill="#8f9a3c"/>
<rect x="215.26" y="307.60" width="4.802" height="14.90" fill="#fca2b9"/>
<rect x="215.26" y="322.50" width="4.802" height="8.81" fill="#e2d47c"/>
<rect x="215.26" y="331.31" width="4.802" height="2.64" fill="#3f27a5"/>
<rect x="215.26" y="333.94" width="4.802" height="10.25" fill="#a8480a"/>
<rect x="215.26" y="344.20" width="4.802" height="2.64" fill="#ff69b4"/>
<rect x="220.06" y="294.40" width="4.802" height="11.40" fill="#bf6fff"/>
<rect x="220.06" y="271.23" width="4.802" height="23.17" fill="#0b9994"/>
<rect x="220.06" y="270.06" width="4.802" height="1.17" fill="#4a00a2"/>
<rect x="220.06" y="305.80" width="4.802" height="1.80" fill="#8f9a3c"/>
<rect x="220.06" y="307.60" width="4.802" height="14.90" fill="#fca2b9"/>
<rect x="220.06" y="322.50" width="4.802" height="8.81" fill="#e2d47c"/>
<rect x="220.06" y="331.31" width="4.802" height="2.64" fill="#3f27a5"/>
<rect x="220.06" y="333.94" width="4.802" height="10.99" fill="#a8480a"/>
<rect x="220.06" y="344.93" width="4.802" height="2.49" fill="#ff69b4"/>
<rect x="224.86" y="294.40" width="4.802" height="11.40" fill="#bf6fff"/>
<rect x="224.86" y="271.81" width="4.802" height="22.59" fill="#0b9994"/>
<rect x="224.86" y="270.06" width="4.802" height="1.76" fill="#4a00a2"/>
<rect x="224.86" y="305.80" width="4.802" height="1.80" fill="#8f9a3c"/>
<rect x="224.86" y="307.60" width="4.802" height="14.90" fill="#fca2b9"/>
<rect x="224.86" y="322.50" width="4.802" height="8.81" fill="#e2d47c"/>
<rect x="224.86" y="331.31" width="4.802" height="2.64" fill="#3f27a5"/>
<rect x="224.86" y="333.94" width="4.802" height="10.99" fill="#a8480a"/>
<rect x="224.86" y="344.93" width="4.802" height="2.49" fill="#ff69b4"/>
<rect x="229.66" y="294.40" width="4.802" height="11.40" fill="#bf6fff"/>
<rect x="229.66" y="272.25" width="4.802" height="22.15" fill="#0b9994"/>
<rect x="229.66" y="270.06" width="4.802" height="2.20" fill="#4a00a2"/>
<rect x="229.66" y="305.80" width="4.802" height="1.80" fill="#8f9a3c"/>
<rect x="229.66" y="307.60" width="4.802" height="14.90" fill="#fca2b9"/>
<rect x="229.66" y="322.50" width="4.802" height="8.81" fill="#e2d47c"/>
<rect x="229.66" y="331.31" width="4.802" height="2.64" fill="#3f27a5"/>
<rect x="229.66" y="333.94" width="4.802" height="10.99" fill="#a8480a"/>
<rect x="229.66" y="344.93" width="4.802" height="2.78" fill="#ff69b4"/>
<rect x="234.46" y="294.40" width="4.802" height="11.40" fill="#bf6fff"/>
<rect x="234.46" y="274.45" width="4.802" height="19.95" fill="#0b9994"/>
<rect x="234.46" y="272.25" width="4.802" height="2.20" fill="#4a00a2"/>
<rect x="234.46" y="305.80" width="4.802" height="1.80" fill="#8f9a3c"/>
<rect x="234.46" y="307.60" width="4.802" height="14.90" fill="#fca2b9"/>
<rect x="234.46" y="322.50" width="4.802" height="8.81" fill="#e2d47c"/>
<rect x="234.46" y="331.31" width="4.802" height="2.64" fill="#3f27a5"/>
<rect x="234.46" y="333.94" width="4.802" height="11.43" fill="#a8480a"/>
<rect x="234.46" y="345.37" width="4.802" height="2.64" fill="#ff69b4"/>
<rect x="239.27" y="283.97" width="4.802" height="21.83" fill="#0b9994"/>
<rect x="239.27" y="280.31" width="4.802" height="3.66" fill="#4a00a2"/>
<rect x="239.27" y="305.80" width="4.802" height="1.80" fill="#8f9a3c"/>
<rect x="239.27" y="307.60" width="4.802" height="14.90" fill="#fca2b9"/>
<rect x="239.27" y="322.50" width="4.802" height="0.02" fill="#f7e27a"/>
<rect x="239.27" y="322.52" width="4.802" height="11.43" fill="#e2d47c"/>
<rect x="239.27" y="333.94" width="4.802" height="3.66" fill="#3f27a5"/>
<rect x="239.27" y="337.61" width="4.802" height="8.79" fill="#a8480a"/>
<rect x="239.27" y="346.39" width="4.802" height="3.95" fill="#ff69b4"/>
<rect x="244.07" y="285.44" width="4.802" height="20.36" fill="#0b9994"/>
<rect x="244.07" y="281.77" width="4.802" height="3.66" fill="#4a00a2"/>
<rect x="244.07" y="305.80" width="4.802" height="1.80" fill="#8f9a3c"/>
<rect x="244.07" y="307.60" width="4.802" height="14.90" fill="#fca2b9"/>
<rect x="244.07" y="322.50" width="4.802" height="0.60" fill="#f7e27a"/>
<rect x="244.07" y="323.10" width="4.802" height="11.57" fill="#e2d47c"/>
<rect x="244.07" y="334.68" width="4.802" height="2.93" fill="#ba6e0c"/>
<rect x="244.07" y="337.61" width="4.802" height="2.20" fill="#3f27a5"/>
<rect x="244.07" y="339.80" width="4.802" height="7.32" fill="#a8480a"/>
<rect x="244.07" y="347.13" width="4.802" height="4.39" fill="#ff69b4"/>
<rect x="248.87" y="287.19" width="4.802" height="18.61" fill="#0b9994"/>
<rect x="248.87" y="283.97" width="4.802" height="3.22" fill="#4a00a2"/>
<rect x="248.87" y="305.80" width="4.802" height="1.80" fill="#8f9a3c"/>
<rect x="248.87" y="307.60" width="4.802" height="14.90" fill="#fca2b9"/>
<rect x="248.87" y="322.50" width="4.802" height="0.90" fill="#f7e27a"/>
<rect x="248.87" y="323.40" width="4.802" height="10.55" fill="#e2d47c"/>
<rect x="248.87" y="333.94" width="4.802" height="4.39" fill="#ba6e0c"/>
<rect x="248.87" y="338.34" width="4.802" height="9.52" fill="#a8480a"/>
<rect x="248.87" y="347.86" width="4.802" height="4.39" fill="#ff69b4"/>
<rect x="253.67" y="289.10" width="4.802" height="16.70" fill="#0b9994"/>
<rect x="253.67" y="256.87" width="4.802" height="32.22" fill="#4a00a2"/>
<rect x="253.67" y="305.80" width="4.802" height="1.80" fill="#8f9a3c"/>
<rect x="253.67" y="307.60" width="4.802" height="14.90" fill="#fca2b9"/>
<rect x="253.67" y="322.50" width="4.802" height="1.48" fill="#f7e27a"/>
<rect x="253.67" y="323.98" width="4.802" height="8.20" fill="#e2d47c"/>
<rect x="253.67" y="332.19" width="4.802" height="3.52" fill="#3f27a5"/>
<rect x="253.67" y="335.70" width="4.802" height="13.62" fill="#a8480a"/>
<rect x="253.67" y="349.32" width="4.802" height="5.13" fill="#ff69b4"/>
<rect x="258.47" y="290.27" width="4.802" height="15.53" fill="#0b9994"/>
<rect x="258.47" y="256.87" width="4.802" height="33.40" fill="#4a00a2"/>
<rect x="258.47" y="305.80" width="4.802" height="1.80" fill="#8f9a3c"/>
<rect x="258.47" y="307.60" width="4.802" height="14.90" fill="#fca2b9"/>
<rect x="258.47" y="322.50" width="4.802" height="1.78" fill="#f7e27a"/>
<rect x="258.47" y="324.28" width="4.802" height="7.91" fill="#e2d47c"/>
<rect x="258.47" y="332.19" width="4.802" height="3.52" fill="#3f27a5"/>
<rect x="258.47" y="335.70" width="4.802" height="14.35" fill="#a8480a"/>
<rect x="258.47" y="350.06" width="4.802" height="5.86" fill="#ff69b4"/>
<rect x="263.28" y="291.29" width="4.802" height="14.51" fill="#0b9994"/>
<rect x="263.28" y="256.58" width="4.802" height="34.72" fill="#4a00a2"/>
<rect x="263.28" y="305.80" width="4.802" height="1.80" fill="#8f9a3c"/>
<rect x="263.28" y="307.60" width="4.802" height="14.90" fill="#fca2b9"/>
<rect x="263.28" y="322.50" width="4.802" height="1.98" fill="#f7e27a"/>
<rect x="263.28" y="324.48" width="4.802" height="8.00" fill="#e2d47c"/>
<rect x="263.28" y="332.48" width="4.802" height="32.65" fill="#8fd0f2"/>
<rect x="263.28" y="365.13" width="4.802" height="2.93" fill="#3f27a5"/>
<rect x="263.28" y="368.06" width="4.802" height="16.11" fill="#a8480a"/>
<rect x="263.28" y="384.17" width="4.802" height="5.13" fill="#ff69b4"/>
<rect x="268.08" y="292.03" width="4.802" height="13.77" fill="#0b9994"/>
<rect x="268.08" y="255.70" width="4.802" height="36.33" fill="#4a00a2"/>
<rect x="268.08" y="305.80" width="4.802" height="1.80" fill="#8f9a3c"/>
<rect x="268.08" y="307.60" width="4.802" height="14.90" fill="#fca2b9"/>
<rect x="268.08" y="322.50" width="4.802" height="1.98" fill="#f7e27a"/>
<rect x="268.08" y="324.48" width="4.802" height="8.00" fill="#e2d47c"/>
<rect x="268.08" y="332.48" width="4.802" height="32.65" fill="#8fd0f2"/>
<rect x="268.08" y="365.13" width="4.802" height="2.93" fill="#3f27a5"/>
<rect x="268.08" y="368.06" width="4.802" height="17.58" fill="#a8480a"/>
<rect x="268.08" y="385.63" width="4.802" height="5.13" fill="#ff69b4"/>
<rect x="272.88" y="293.20" width="4.802" height="12.60" fill="#0b9994"/>
<rect x="272.88" y="254.24" width="4.802" height="38.96" fill="#4a00a2"/>
<rect x="272.88" y="305.80" width="4.802" height="1.80" fill="#8f9a3c"/>
<rect x="272.88" y="307.60" width="4.802" height="14.90" fill="#fca2b9"/>
<rect x="272.88" y="322.50" width="4.802" height="1.98" fill="#f7e27a"/>
<rect x="272.88" y="324.48" width="4.802" height="8.00" fill="#e2d47c"/>
<rect x="272.88" y="332.48" width="4.802" height="32.65" fill="#8fd0f2"/>
<rect x="272.88" y="365.13" width="4.802" height="2.93" fill="#3f27a5"/>
<rect x="272.88" y="368.06" width="4.802" height="18.31" fill="#a8480a"/>
<rect x="272.88" y="386.37" width="4.802" height="5.86" fill="#ff69b4"/>
<rect x="277.68" y="294.39" width="4.802" height="11.41" fill="#0b9994"/>
<rect x="277.68" y="253.21" width="4.802" height="41.18" fill="#4a00a2"/>
<rect x="277.68" y="305.80" width="4.802" height="1.80" fill="#8f9a3c"/>
<rect x="277.68" y="307.60" width="4.802" height="14.90" fill="#fca2b9"/>
<rect x="277.68" y="322.50" width="4.802" height="1.98" fill="#f7e27a"/>
<rect x="277.68" y="324.48" width="4.802" height="8.00" fill="#e2d47c"/>
<rect x="277.68" y="332.48" width="4.802" height="32.65" fill="#8fd0f2"/>
<rect x="277.68" y="365.13" width="4.802" height="2.93" fill="#3f27a5"/>
<rect x="277.68" y="368.06" width="4.802" height="19.77" fill="#a8480a"/>
<rect x="277.68" y="387.83" width="4.802" height="6.15" fill="#ff69b4"/>
<rect x="282.48" y="294.39" width="4.802" height="11.41" fill="#0b9994"/>
<rect x="282.48" y="252.19" width="4.802" height="42.21" fill="#4a00a2"/>
<rect x="282.48" y="305.80" width="4.802" height="1.80" fill="#8f9a3c"/>
<rect x="282.48" y="307.60" width="4.802" height="14.90" fill="#fca2b9"/>
<rect x="282.48" y="322.50" width="4.802" height="3.44" fill="#f7e27a"/>
<rect x="282.48" y="325.94" width="4.802" height="8.00" fill="#e2d47c"/>
<rect x="282.48" y="333.94" width="4.802" height="34.85" fill="#8fd0f2"/>
<rect x="282.48" y="368.79" width="4.802" height="3.66" fill="#3f27a5"/>
<rect x="282.48" y="372.45" width="4.802" height="19.77" fill="#a8480a"/>
<rect x="282.48" y="392.22" width="4.802" height="6.15" fill="#ff69b4"/>
<rect x="287.29" y="294.39" width="4.802" height="11.41" fill="#0b9994"/>
<rect x="287.29" y="252.48" width="4.802" height="41.92" fill="#4a00a2"/>
<rect x="287.29" y="305.80" width="4.802" height="1.80" fill="#8f9a3c"/>
<rect x="287.29" y="307.60" width="4.802" height="14.90" fill="#fca2b9"/>
<rect x="287.29" y="322.50" width="4.802" height="3.44" fill="#f7e27a"/>
<rect x="287.29" y="325.94" width="4.802" height="8.00" fill="#e2d47c"/>
<rect x="287.29" y="333.94" width="4.802" height="34.85" fill="#8fd0f2"/>
<rect x="287.29" y="368.79" width="4.802" height="3.66" fill="#3f27a5"/>
<rect x="287.29" y="372.45" width="4.802" height="20.51" fill="#a8480a"/>
<rect x="287.29" y="392.96" width="4.802" height="5.42" fill="#ff69b4"/>
<rect x="292.09" y="295.86" width="4.802" height="9.94" fill="#0b9994"/>
<rect x="292.09" y="253.36" width="4.802" height="42.50" fill="#4a00a2"/>
<rect x="292.09" y="305.80" width="4.802" height="1.80" fill="#8f9a3c"/>
<rect x="292.09" y="307.60" width="4.802" height="14.90" fill="#fca2b9"/>
<rect x="292.09" y="322.50" width="4.802" height="3.44" fill="#f7e27a"/>
<rect x="292.09" y="325.94" width="4.802" height="8.00" fill="#e2d47c"/>
<rect x="292.09" y="333.94" width="4.802" height="34.85" fill="#8fd0f2"/>
<rect x="292.09" y="368.79" width="4.802" height="3.66" fill="#3f27a5"/>
<rect x="292.09" y="372.45" width="4.802" height="21.24" fill="#a8480a"/>
<rect x="292.09" y="393.69" width="4.802" height="5.42" fill="#ff69b4"/>
<rect x="296.89" y="295.86" width="4.802" height="9.94" fill="#0b9994"/>
<rect x="296.89" y="253.65" width="4.802" height="42.21" fill="#4a00a2"/>
<rect x="296.89" y="305.80" width="4.802" height="1.80" fill="#8f9a3c"/>
<rect x="296.89" y="307.60" width="4.802" height="14.90" fill="#fca2b9"/>
<rect x="296.89" y="322.50" width="4.802" height="3.44" fill="#f7e27a"/>
<rect x="296.89" y="325.94" width="4.802" height="8.00" fill="#e2d47c"/>
<rect x="296.89" y="333.94" width="4.802" height="34.85" fill="#8fd0f2"/>
<rect x="296.89" y="368.79" width="4.802" height="3.66" fill="#3f27a5"/>
<rect x="296.89" y="372.45" width="4.802" height="21.24" fill="#a8480a"/>
<rect x="296.89" y="393.69" width="4.802" height="5.13" fill="#ff69b4"/>
<rect x="301.69" y="295.86" width="4.802" height="9.94" fill="#0b9994"/>
<rect x="301.69" y="253.36" width="4.802" height="42.50" fill="#4a00a2"/>
<rect x="301.69" y="305.80" width="4.802" height="1.80" fill="#8f9a3c"/>
<rect x="301.69" y="307.60" width="4.802" height="14.90" fill="#fca2b9"/>
<rect x="301.69" y="322.50" width="4.802" height="4.18" fill="#f7e27a"/>
<rect x="301.69" y="326.68" width="4.802" height="8.00" fill="#e2d47c"/>
<rect x="301.69" y="334.68" width="4.802" height="34.11" fill="#8fd0f2"/>
<rect x="301.69" y="368.79" width="4.802" height="3.66" fill="#3f27a5"/>
<rect x="301.69" y="372.45" width="4.802" height="14.94" fill="#a8480a"/>
<rect x="301.69" y="387.39" width="4.802" height="5.13" fill="#ff69b4"/>
<rect x="306.49" y="297.03" width="4.802" height="8.77" fill="#0b9994"/>
<rect x="306.49" y="253.06" width="4.802" height="43.97" fill="#4a00a2"/>
<rect x="306.49" y="305.80" width="4.802" height="1.80" fill="#8f9a3c"/>
<rect x="306.49" y="307.60" width="4.802" height="14.90" fill="#fca2b9"/>
<rect x="306.49" y="322.50" width="4.802" height="6.37" fill="#f7e27a"/>
<rect x="306.49" y="328.87" width="4.802" height="8.00" fill="#e2d47c"/>
<rect x="306.49" y="336.87" width="4.802" height="35.14" fill="#8fd0f2"/>
<rect x="306.49" y="372.01" width="4.802" height="3.66" fill="#3f27a5"/>
<rect x="306.49" y="375.67" width="4.802" height="15.38" fill="#a8480a"/>
<rect x="306.49" y="391.05" width="4.802" height="5.57" fill="#ff69b4"/>
<rect x="311.30" y="297.03" width="4.802" height="8.77" fill="#0b9994"/>
<rect x="311.30" y="252.48" width="4.802" height="44.55" fill="#4a00a2"/>
<rect x="311.30" y="305.80" width="4.802" height="1.80" fill="#8f9a3c"/>
<rect x="311.30" y="307.60" width="4.802" height="14.90" fill="#fca2b9"/>
<rect x="311.30" y="322.50" width="4.802" height="6.37" fill="#f7e27a"/>
<rect x="311.30" y="328.87" width="4.802" height="8.00" fill="#e2d47c"/>
<rect x="311.30" y="336.87" width="4.802" height="35.14" fill="#8fd0f2"/>
<rect x="311.30" y="372.01" width="4.802" height="3.66" fill="#3f27a5"/>
<rect x="311.30" y="375.67" width="4.802" height="15.82" fill="#a8480a"/>
<rect x="311.30" y="391.49" width="4.802" height="5.57" fill="#ff69b4"/>
<rect x="316.10" y="297.03" width="4.802" height="8.77" fill="#0b9994"/>
<rect x="316.10" y="251.75" width="4.802" height="45.28" fill="#4a00a2"/>
<rect x="316.10" y="305.80" width="4.802" height="1.80" fill="#8f9a3c"/>
<rect x="316.10" y="307.60" width="4.802" height="14.90" fill="#fca2b9"/>
<rect x="316.10" y="322.50" width="4.802" height="6.37" fill="#f7e27a"/>
<rect x="316.10" y="328.87" width="4.802" height="8.00" fill="#e2d47c"/>
<rect x="316.10" y="336.87" width="4.802" height="35.14" fill="#8fd0f2"/>
<rect x="316.10" y="372.01" width="4.802" height="3.66" fill="#3f27a5"/>
<rect x="316.10" y="375.67" width="4.802" height="16.11" fill="#a8480a"/>
<rect x="316.10" y="391.79" width="4.802" height="5.57" fill="#ff69b4"/>
<rect x="320.90" y="297.03" width="4.802" height="8.77" fill="#0b9994"/>
<rect x="320.90" y="251.45" width="4.802" height="45.58" fill="#4a00a2"/>
<rect x="320.90" y="305.80" width="4.802" height="1.80" fill="#8f9a3c"/>
<rect x="320.90" y="307.60" width="4.802" height="14.90" fill="#fca2b9"/>
<rect x="320.90" y="322.50" width="4.802" height="9.30" fill="#f7e27a"/>
<rect x="320.90" y="331.80" width="4.802" height="8.00" fill="#e2d47c"/>
<rect x="320.90" y="339.80" width="4.802" height="32.21" fill="#8fd0f2"/>
<rect x="320.90" y="372.01" width="4.802" height="3.66" fill="#3f27a5"/>
<rect x="320.90" y="375.67" width="4.802" height="16.11" fill="#a8480a"/>
<rect x="320.90" y="391.79" width="4.802" height="5.57" fill="#ff69b4"/>
<rect x="325.70" y="297.03" width="4.802" height="8.77" fill="#0b9994"/>
<rect x="325.70" y="251.75" width="4.802" height="45.28" fill="#4a00a2"/>
<rect x="325.70" y="305.80" width="4.802" height="1.80" fill="#8f9a3c"/>
<rect x="325.70" y="307.60" width="4.802" height="14.90" fill="#fca2b9"/>
<rect x="325.70" y="322.50" width="4.802" height="9.80" fill="#f7e27a"/>
<rect x="325.70" y="332.30" width="4.802" height="7.50" fill="#e2d47c"/>
<rect x="325.70" y="339.80" width="4.802" height="32.21" fill="#8fd0f2"/>
<rect x="325.70" y="372.01" width="4.802" height="3.66" fill="#3f27a5"/>
<rect x="325.70" y="375.67" width="4.802" height="16.11" fill="#a8480a"/>
<rect x="325.70" y="391.79" width="4.802" height="5.27" fill="#ff69b4"/>
<rect x="330.50" y="297.03" width="4.802" height="8.77" fill="#0b9994"/>
<rect x="330.50" y="251.75" width="4.802" height="45.28" fill="#4a00a2"/>
<rect x="330.50" y="305.80" width="4.802" height="1.80" fill="#8f9a3c"/>
<rect x="330.50" y="307.60" width="4.802" height="14.90" fill="#fca2b9"/>
<rect x="330.50" y="322.50" width="4.802" height="10.30" fill="#f7e27a"/>
<rect x="330.50" y="332.80" width="4.802" height="7.00" fill="#e2d47c"/>
<rect x="330.50" y="339.80" width="4.802" height="36.31" fill="#8fd0f2"/>
<rect x="330.50" y="376.11" width="4.802" height="3.66" fill="#3f27a5"/>
<rect x="330.50" y="379.77" width="4.802" height="17.14" fill="#a8480a"/>
<rect x="330.50" y="396.91" width="4.802" height="5.57" fill="#ff69b4"/>
<rect x="335.31" y="297.03" width="4.802" height="8.77" fill="#0b9994"/>
<rect x="335.31" y="251.31" width="4.802" height="45.72" fill="#4a00a2"/>
<rect x="335.31" y="305.80" width="4.802" height="1.80" fill="#8f9a3c"/>
<rect x="335.31" y="307.60" width="4.802" height="14.90" fill="#fca2b9"/>
<rect x="335.31" y="322.50" width="4.802" height="10.80" fill="#f7e27a"/>
<rect x="335.31" y="333.30" width="4.802" height="6.50" fill="#e2d47c"/>
<rect x="335.31" y="339.80" width="4.802" height="35.58" fill="#8fd0f2"/>
<rect x="335.31" y="375.38" width="4.802" height="6.59" fill="#ba6e0c"/>
<rect x="335.31" y="381.97" width="4.802" height="4.39" fill="#3f27a5"/>
<rect x="335.31" y="386.37" width="4.802" height="13.92" fill="#a8480a"/>
<rect x="335.31" y="400.28" width="4.802" height="5.86" fill="#ff69b4"/>
<rect x="340.11" y="290.56" width="4.802" height="15.24" fill="#0b9994"/>
<rect x="340.11" y="248.82" width="4.802" height="41.75" fill="#4a00a2"/>
<rect x="340.11" y="305.80" width="4.802" height="1.80" fill="#8f9a3c"/>
<rect x="340.11" y="307.60" width="4.802" height="14.90" fill="#fca2b9"/>
<rect x="340.11" y="322.50" width="4.802" height="13.50" fill="#f7e27a"/>
<rect x="340.11" y="336.00" width="4.802" height="6.00" fill="#e2d47c"/>
<rect x="340.11" y="342.00" width="4.802" height="32.65" fill="#8fd0f2"/>
<rect x="340.11" y="374.65" width="4.802" height="7.32" fill="#ba6e0c"/>
<rect x="340.11" y="381.97" width="4.802" height="5.13" fill="#3f27a5"/>
<rect x="340.11" y="387.10" width="4.802" height="17.58" fill="#a8480a"/>
<rect x="340.11" y="404.68" width="4.802" height="5.86" fill="#ff69b4"/>
<rect x="344.91" y="284.70" width="4.802" height="21.10" fill="#0b9994"/>
<rect x="344.91" y="243.40" width="4.802" height="41.31" fill="#4a00a2"/>
<rect x="344.91" y="305.80" width="4.802" height="1.80" fill="#8f9a3c"/>
<rect x="344.91" y="307.60" width="4.802" height="14.90" fill="#fca2b9"/>
<rect x="344.91" y="322.50" width="4.802" height="13.27" fill="#f7e27a"/>
<rect x="344.91" y="335.77" width="4.802" height="5.50" fill="#e2d47c"/>
<rect x="344.91" y="341.27" width="4.802" height="33.38" fill="#8fd0f2"/>
<rect x="344.91" y="374.65" width="4.802" height="7.32" fill="#ba6e0c"/>
<rect x="344.91" y="381.97" width="4.802" height="5.13" fill="#3f27a5"/>
<rect x="344.91" y="387.10" width="4.802" height="20.07" fill="#a8480a"/>
<rect x="344.91" y="407.17" width="4.802" height="6.30" fill="#ff69b4"/>
<rect x="349.71" y="278.84" width="4.802" height="26.96" fill="#0b9994"/>
<rect x="349.71" y="239.30" width="4.802" height="39.55" fill="#4a00a2"/>
<rect x="349.71" y="305.80" width="4.802" height="1.80" fill="#8f9a3c"/>
<rect x="349.71" y="307.60" width="4.802" height="14.90" fill="#fca2b9"/>
<rect x="349.71" y="322.50" width="4.802" height="13.77" fill="#f7e27a"/>
<rect x="349.71" y="336.27" width="4.802" height="5.00" fill="#e2d47c"/>
<rect x="349.71" y="341.27" width="4.802" height="33.38" fill="#8fd0f2"/>
<rect x="349.71" y="374.65" width="4.802" height="7.32" fill="#ba6e0c"/>
<rect x="349.71" y="381.97" width="4.802" height="5.57" fill="#3f27a5"/>
<rect x="349.71" y="387.54" width="4.802" height="22.26" fill="#a8480a"/>
<rect x="349.71" y="409.80" width="4.802" height="6.15" fill="#ff69b4"/>
<rect x="354.51" y="276.07" width="4.802" height="29.73" fill="#0b9994"/>
<rect x="354.51" y="236.39" width="4.802" height="39.68" fill="#4a00a2"/>
<rect x="354.51" y="305.80" width="4.802" height="1.80" fill="#8f9a3c"/>
<rect x="354.51" y="307.60" width="4.802" height="14.90" fill="#fca2b9"/>
<rect x="354.51" y="322.50" width="4.802" height="14.27" fill="#f7e27a"/>
<rect x="354.51" y="336.77" width="4.802" height="4.50" fill="#e2d47c"/>
<rect x="354.51" y="341.27" width="4.802" height="33.38" fill="#8fd0f2"/>
<rect x="354.51" y="374.65" width="4.802" height="7.32" fill="#ba6e0c"/>
<rect x="354.51" y="381.97" width="4.802" height="5.86" fill="#3f27a5"/>
<rect x="354.51" y="387.83" width="4.802" height="24.46" fill="#a8480a"/>
<rect x="354.51" y="412.29" width="4.802" height="5.86" fill="#ff69b4"/>
<rect x="359.32" y="273.44" width="4.802" height="32.36" fill="#0b9994"/>
<rect x="359.32" y="230.53" width="4.802" height="42.90" fill="#4a00a2"/>
<rect x="359.32" y="305.80" width="4.802" height="1.80" fill="#8f9a3c"/>
<rect x="359.32" y="307.60" width="4.802" height="14.90" fill="#fca2b9"/>
<rect x="359.32" y="322.50" width="4.802" height="19.89" fill="#f7e27a"/>
<rect x="359.32" y="342.39" width="4.802" height="4.00" fill="#e2d47c"/>
<rect x="359.32" y="346.39" width="4.802" height="32.65" fill="#8fd0f2"/>
<rect x="359.32" y="379.04" width="4.802" height="8.79" fill="#ba6e0c"/>
<rect x="359.32" y="387.83" width="4.802" height="5.86" fill="#3f27a5"/>
<rect x="359.32" y="393.69" width="4.802" height="25.34" fill="#a8480a"/>
<rect x="359.32" y="419.03" width="4.802" height="5.86" fill="#ff69b4"/>
<rect x="364.12" y="269.04" width="4.802" height="36.76" fill="#0b9994"/>
<rect x="364.12" y="231.27" width="4.802" height="37.78" fill="#4a00a2"/>
<rect x="364.12" y="215.15" width="4.802" height="16.11" fill="#07564f"/>
<rect x="364.12" y="305.80" width="4.802" height="1.80" fill="#8f9a3c"/>
<rect x="364.12" y="307.60" width="4.802" height="14.90" fill="#fca2b9"/>
<rect x="364.12" y="322.50" width="4.802" height="32.32" fill="#f7e27a"/>
<rect x="364.12" y="354.82" width="4.802" height="11.72" fill="#3f27a5"/>
<rect x="364.12" y="366.53" width="4.802" height="32.76" fill="#a8480a"/>
<rect x="364.12" y="399.30" width="4.802" height="5.57" fill="#ff69b4"/>
<rect x="368.92" y="266.11" width="4.802" height="39.69" fill="#0b9994"/>
<rect x="368.92" y="230.53" width="4.802" height="35.58" fill="#4a00a2"/>
<rect x="368.92" y="210.32" width="4.802" height="20.21" fill="#07564f"/>
<rect x="368.92" y="305.80" width="4.802" height="1.80" fill="#8f9a3c"/>
<rect x="368.92" y="307.60" width="4.802" height="14.90" fill="#fca2b9"/>
<rect x="368.92" y="322.50" width="4.802" height="32.32" fill="#f7e27a"/>
<rect x="368.92" y="354.82" width="4.802" height="8.79" fill="#3f27a5"/>
<rect x="368.92" y="363.61" width="4.802" height="35.69" fill="#a8480a"/>
<rect x="368.92" y="399.30" width="4.802" height="5.57" fill="#ff69b4"/>
<rect x="373.72" y="267.58" width="4.802" height="38.22" fill="#0b9994"/>
<rect x="373.72" y="234.93" width="4.802" height="32.65" fill="#4a00a2"/>
<rect x="373.72" y="210.76" width="4.802" height="24.17" fill="#07564f"/>
<rect x="373.72" y="305.80" width="4.802" height="1.80" fill="#8f9a3c"/>
<rect x="373.72" y="307.60" width="4.802" height="14.94" fill="#fca2b9"/>
<rect x="373.72" y="322.54" width="4.802" height="14.41" fill="#f7e27a"/>
<rect x="373.72" y="336.95" width="4.802" height="9.08" fill="#3f27a5"/>
<rect x="373.72" y="346.03" width="4.802" height="34.42" fill="#a8480a"/>
<rect x="373.72" y="380.45" width="4.802" height="5.13" fill="#ff69b4"/>
<rect x="378.52" y="267.87" width="4.802" height="37.93" fill="#0b9994"/>
<rect x="378.52" y="232.73" width="4.802" height="35.14" fill="#4a00a2"/>
<rect x="378.52" y="206.07" width="4.802" height="26.66" fill="#07564f"/>
<rect x="378.52" y="305.80" width="4.802" height="1.80" fill="#8f9a3c"/>
<rect x="378.52" y="307.60" width="4.802" height="14.97" fill="#fca2b9"/>
<rect x="378.52" y="322.57" width="4.802" height="14.38" fill="#f7e27a"/>
<rect x="378.52" y="336.95" width="4.802" height="9.81" fill="#3f27a5"/>
<rect x="378.52" y="346.76" width="4.802" height="37.79" fill="#a8480a"/>
<rect x="378.52" y="384.55" width="4.802" height="3.95" fill="#ff69b4"/>
<rect x="383.33" y="267.87" width="4.802" height="37.93" fill="#0b9994"/>
<rect x="383.33" y="231.27" width="4.802" height="36.60" fill="#4a00a2"/>
<rect x="383.33" y="200.21" width="4.802" height="31.05" fill="#07564f"/>
<rect x="383.33" y="305.80" width="4.802" height="1.80" fill="#8f9a3c"/>
<rect x="383.33" y="307.60" width="4.802" height="15.01" fill="#fca2b9"/>
<rect x="383.33" y="322.61" width="4.802" height="14.34" fill="#f7e27a"/>
<rect x="383.33" y="336.95" width="4.802" height="9.08" fill="#3f27a5"/>
<rect x="383.33" y="346.03" width="4.802" height="41.01" fill="#a8480a"/>
<rect x="383.33" y="387.04" width="4.802" height="3.66" fill="#ff69b4"/>
<rect x="388.13" y="267.87" width="4.802" height="37.93" fill="#0b9994"/>
<rect x="388.13" y="231.27" width="4.802" height="36.60" fill="#4a00a2"/>
<rect x="388.13" y="196.11" width="4.802" height="35.15" fill="#07564f"/>
<rect x="388.13" y="305.80" width="4.802" height="1.80" fill="#8f9a3c"/>
<rect x="388.13" y="307.60" width="4.802" height="15.04" fill="#fca2b9"/>
<rect x="388.13" y="322.64" width="4.802" height="19.72" fill="#f7e27a"/>
<rect x="388.13" y="342.37" width="4.802" height="9.52" fill="#3f27a5"/>
<rect x="388.13" y="351.89" width="4.802" height="42.48" fill="#a8480a"/>
<rect x="388.13" y="394.37" width="4.802" height="2.93" fill="#ff69b4"/>
<rect x="392.93" y="267.87" width="4.802" height="37.93" fill="#0b9994"/>
<rect x="392.93" y="231.27" width="4.802" height="36.60" fill="#4a00a2"/>
<rect x="392.93" y="207.54" width="4.802" height="23.73" fill="#07564f"/>
<rect x="392.93" y="305.80" width="4.802" height="1.80" fill="#8f9a3c"/>
<rect x="392.93" y="307.60" width="4.802" height="15.08" fill="#fca2b9"/>
<rect x="392.93" y="322.68" width="4.802" height="19.69" fill="#f7e27a"/>
<rect x="392.93" y="342.37" width="4.802" height="8.79" fill="#3f27a5"/>
<rect x="392.93" y="351.15" width="4.802" height="37.35" fill="#a8480a"/>
<rect x="392.93" y="388.51" width="4.802" height="2.93" fill="#ff69b4"/>
<rect x="397.73" y="267.87" width="4.802" height="37.93" fill="#0b9994"/>
<rect x="397.73" y="231.27" width="4.802" height="36.60" fill="#4a00a2"/>
<rect x="397.73" y="211.49" width="4.802" height="19.77" fill="#07564f"/>
<rect x="397.73" y="305.80" width="4.802" height="1.80" fill="#8f9a3c"/>
<rect x="397.73" y="307.60" width="4.802" height="15.11" fill="#fca2b9"/>
<rect x="397.73" y="322.71" width="4.802" height="19.65" fill="#f7e27a"/>
<rect x="397.73" y="342.37" width="4.802" height="9.52" fill="#3f27a5"/>
<rect x="397.73" y="351.89" width="4.802" height="34.13" fill="#a8480a"/>
<rect x="397.73" y="386.02" width="4.802" height="2.49" fill="#ff69b4"/>
<rect x="402.53" y="267.28" width="4.802" height="38.52" fill="#0b9994"/>
<rect x="402.53" y="230.97" width="4.802" height="36.31" fill="#4a00a2"/>
<rect x="402.53" y="212.22" width="4.802" height="18.75" fill="#07564f"/>
<rect x="402.53" y="305.80" width="4.802" height="1.80" fill="#8f9a3c"/>
<rect x="402.53" y="307.60" width="4.802" height="15.15" fill="#fca2b9"/>
<rect x="402.53" y="322.75" width="4.802" height="19.62" fill="#f7e27a"/>
<rect x="402.53" y="342.37" width="4.802" height="9.52" fill="#3f27a5"/>
<rect x="402.53" y="351.89" width="4.802" height="32.66" fill="#a8480a"/>
<rect x="402.53" y="384.55" width="4.802" height="2.49" fill="#ff69b4"/>
<rect x="407.34" y="267.28" width="4.802" height="38.52" fill="#0b9994"/>
<rect x="407.34" y="230.53" width="4.802" height="36.75" fill="#4a00a2"/>
<rect x="407.34" y="210.47" width="4.802" height="20.07" fill="#07564f"/>
<rect x="407.34" y="305.80" width="4.802" height="1.80" fill="#8f9a3c"/>
<rect x="407.34" y="307.60" width="4.802" height="15.18" fill="#fca2b9"/>
<rect x="407.34" y="322.78" width="4.802" height="19.58" fill="#f7e27a"/>
<rect x="407.34" y="342.37" width="4.802" height="9.52" fill="#3f27a5"/>
<rect x="407.34" y="351.89" width="4.802" height="33.69" fill="#a8480a"/>
<rect x="407.34" y="385.58" width="4.802" height="2.20" fill="#ff69b4"/>
<rect x="412.14" y="267.28" width="4.802" height="38.52" fill="#0b9994"/>
<rect x="412.14" y="230.53" width="4.802" height="36.75" fill="#4a00a2"/>
<rect x="412.14" y="210.76" width="4.802" height="19.77" fill="#07564f"/>
<rect x="412.14" y="305.80" width="4.802" height="1.80" fill="#8f9a3c"/>
<rect x="412.14" y="307.60" width="4.802" height="15.22" fill="#fca2b9"/>
<rect x="412.14" y="322.82" width="4.802" height="19.55" fill="#f7e27a"/>
<rect x="412.14" y="342.37" width="4.802" height="9.52" fill="#3f27a5"/>
<rect x="412.14" y="351.89" width="4.802" height="34.13" fill="#a8480a"/>
<rect x="412.14" y="386.02" width="4.802" height="2.05" fill="#ff69b4"/>
<rect x="416.94" y="266.11" width="4.802" height="39.69" fill="#0b9994"/>
<rect x="416.94" y="229.51" width="4.802" height="36.60" fill="#4a00a2"/>
<rect x="416.94" y="208.56" width="4.802" height="20.95" fill="#07564f"/>
<rect x="416.94" y="305.80" width="4.802" height="1.80" fill="#8f9a3c"/>
<rect x="416.94" y="307.60" width="4.802" height="15.25" fill="#fca2b9"/>
<rect x="416.94" y="322.85" width="4.802" height="19.51" fill="#f7e27a"/>
<rect x="416.94" y="342.37" width="4.802" height="9.52" fill="#3f27a5"/>
<rect x="416.94" y="351.89" width="4.802" height="35.15" fill="#a8480a"/>
<rect x="416.94" y="387.04" width="4.802" height="1.90" fill="#ff69b4"/>
<rect x="421.74" y="267.58" width="4.802" height="38.22" fill="#0b9994"/>
<rect x="421.74" y="229.80" width="4.802" height="37.78" fill="#4a00a2"/>
<rect x="421.74" y="209.30" width="4.802" height="20.51" fill="#07564f"/>
<rect x="421.74" y="305.80" width="4.802" height="1.80" fill="#8f9a3c"/>
<rect x="421.74" y="307.60" width="4.802" height="15.29" fill="#fca2b9"/>
<rect x="421.74" y="322.89" width="4.802" height="19.48" fill="#f7e27a"/>
<rect x="421.74" y="342.37" width="4.802" height="9.52" fill="#3f27a5"/>
<rect x="421.74" y="351.89" width="4.802" height="35.15" fill="#a8480a"/>
<rect x="421.74" y="387.04" width="4.802" height="2.20" fill="#ff69b4"/>
<rect x="426.54" y="268.31" width="4.802" height="37.49" fill="#0b9994"/>
<rect x="426.54" y="229.80" width="4.802" height="38.51" fill="#4a00a2"/>
<rect x="426.54" y="208.56" width="4.802" height="21.24" fill="#07564f"/>
<rect x="426.54" y="305.80" width="4.802" height="1.80" fill="#8f9a3c"/>
<rect x="426.54" y="307.60" width="4.802" height="15.32" fill="#fca2b9"/>
<rect x="426.54" y="322.93" width="4.802" height="19.44" fill="#f7e27a"/>
<rect x="426.54" y="342.37" width="4.802" height="9.52" fill="#3f27a5"/>
<rect x="426.54" y="351.89" width="4.802" height="36.62" fill="#a8480a"/>
<rect x="426.54" y="388.51" width="4.802" height="2.20" fill="#ff69b4"/>
<rect x="431.35" y="269.04" width="4.802" height="36.76" fill="#0b9994"/>
<rect x="431.35" y="229.80" width="4.802" height="39.24" fill="#4a00a2"/>
<rect x="431.35" y="204.90" width="4.802" height="24.90" fill="#07564f"/>
<rect x="431.35" y="305.80" width="4.802" height="1.80" fill="#8f9a3c"/>
<rect x="431.35" y="307.60" width="4.802" height="15.36" fill="#fca2b9"/>
<rect x="431.35" y="322.96" width="4.802" height="19.41" fill="#f7e27a"/>
<rect x="431.35" y="342.37" width="4.802" height="9.52" fill="#3f27a5"/>
<rect x="431.35" y="351.89" width="4.802" height="38.52" fill="#a8480a"/>
<rect x="431.35" y="390.41" width="4.802" height="2.05" fill="#ff69b4"/>
<rect x="436.15" y="269.04" width="4.802" height="36.76" fill="#0b9994"/>
<rect x="436.15" y="229.80" width="4.802" height="39.24" fill="#4a00a2"/>
<rect x="436.15" y="206.07" width="4.802" height="23.73" fill="#07564f"/>
<rect x="436.15" y="305.80" width="4.802" height="1.80" fill="#8f9a3c"/>
<rect x="436.15" y="307.60" width="4.802" height="15.40" fill="#fca2b9"/>
<rect x="436.15" y="323.00" width="4.802" height="19.37" fill="#f7e27a"/>
<rect x="436.15" y="342.37" width="4.802" height="9.52" fill="#3f27a5"/>
<rect x="436.15" y="351.89" width="4.802" height="38.08" fill="#a8480a"/>
<rect x="436.15" y="389.97" width="4.802" height="1.90" fill="#ff69b4"/>
<rect x="440.95" y="269.04" width="4.802" height="36.76" fill="#0b9994"/>
<rect x="440.95" y="229.51" width="4.802" height="39.53" fill="#4a00a2"/>
<rect x="440.95" y="204.90" width="4.802" height="24.61" fill="#07564f"/>
<rect x="440.95" y="305.80" width="4.802" height="1.80" fill="#8f9a3c"/>
<rect x="440.95" y="307.60" width="4.802" height="15.43" fill="#fca2b9"/>
<rect x="440.95" y="323.03" width="4.802" height="19.33" fill="#f7e27a"/>
<rect x="440.95" y="342.37" width="4.802" height="9.52" fill="#3f27a5"/>
<rect x="440.95" y="351.89" width="4.802" height="38.82" fill="#a8480a"/>
<rect x="440.95" y="390.70" width="4.802" height="1.90" fill="#ff69b4"/>
<rect x="445.75" y="269.04" width="4.802" height="36.76" fill="#0b9994"/>
<rect x="445.75" y="229.51" width="4.802" height="39.53" fill="#4a00a2"/>
<rect x="445.75" y="206.07" width="4.802" height="23.44" fill="#07564f"/>
<rect x="445.75" y="305.80" width="4.802" height="1.80" fill="#8f9a3c"/>
<rect x="445.75" y="307.60" width="4.802" height="15.47" fill="#fca2b9"/>
<rect x="445.75" y="323.07" width="4.802" height="20.47" fill="#f7e27a"/>
<rect x="445.75" y="343.54" width="4.802" height="9.81" fill="#3f27a5"/>
<rect x="445.75" y="353.35" width="4.802" height="37.35" fill="#a8480a"/>
<rect x="445.75" y="390.70" width="4.802" height="1.90" fill="#ff69b4"/>
<rect x="450.55" y="269.04" width="4.802" height="36.76" fill="#0b9994"/>
<rect x="450.55" y="229.51" width="4.802" height="39.53" fill="#4a00a2"/>
<rect x="450.55" y="206.37" width="4.802" height="23.14" fill="#07564f"/>
<rect x="450.55" y="305.80" width="4.802" height="1.80" fill="#8f9a3c"/>
<rect x="450.55" y="307.60" width="4.802" height="15.50" fill="#fca2b9"/>
<rect x="450.55" y="323.10" width="4.802" height="20.44" fill="#f7e27a"/>
<rect x="450.55" y="343.54" width="4.802" height="9.81" fill="#3f27a5"/>
<rect x="450.55" y="353.35" width="4.802" height="37.35" fill="#a8480a"/>
<rect x="450.55" y="390.70" width="4.802" height="1.90" fill="#ff69b4"/>
<rect x="455.36" y="268.31" width="4.802" height="37.49" fill="#0b9994"/>
<rect x="455.36" y="229.80" width="4.802" height="38.51" fill="#4a00a2"/>
<rect x="455.36" y="207.10" width="4.802" height="22.70" fill="#07564f"/>
<rect x="455.36" y="305.80" width="4.802" height="1.80" fill="#8f9a3c"/>
<rect x="455.36" y="307.60" width="4.802" height="15.54" fill="#fca2b9"/>
<rect x="455.36" y="323.14" width="4.802" height="20.40" fill="#f7e27a"/>
<rect x="455.36" y="343.54" width="4.802" height="9.81" fill="#3f27a5"/>
<rect x="455.36" y="353.35" width="4.802" height="37.06" fill="#a8480a"/>
<rect x="455.36" y="390.41" width="4.802" height="1.76" fill="#ff69b4"/>
<rect x="460.16" y="267.87" width="4.802" height="37.93" fill="#0b9994"/>
<rect x="460.16" y="231.27" width="4.802" height="36.60" fill="#4a00a2"/>
<rect x="460.16" y="210.32" width="4.802" height="20.95" fill="#07564f"/>
<rect x="460.16" y="305.80" width="4.802" height="1.80" fill="#8f9a3c"/>
<rect x="460.16" y="307.60" width="4.802" height="15.57" fill="#fca2b9"/>
<rect x="460.16" y="323.17" width="4.802" height="20.36" fill="#f7e27a"/>
<rect x="460.16" y="343.54" width="4.802" height="9.81" fill="#3f27a5"/>
<rect x="460.16" y="353.35" width="4.802" height="35.59" fill="#a8480a"/>
<rect x="460.16" y="388.95" width="4.802" height="2.05" fill="#ff69b4"/>
<rect x="464.96" y="267.87" width="4.802" height="37.93" fill="#0b9994"/>
<rect x="464.96" y="232.44" width="4.802" height="35.43" fill="#4a00a2"/>
<rect x="464.96" y="211.49" width="4.802" height="20.95" fill="#07564f"/>
<rect x="464.96" y="305.80" width="4.802" height="1.80" fill="#8f9a3c"/>
<rect x="464.96" y="307.60" width="4.802" height="15.61" fill="#fca2b9"/>
<rect x="464.96" y="323.21" width="4.802" height="20.33" fill="#f7e27a"/>
<rect x="464.96" y="343.54" width="4.802" height="9.81" fill="#3f27a5"/>
<rect x="464.96" y="353.35" width="4.802" height="35.15" fill="#a8480a"/>
<rect x="464.96" y="388.51" width="4.802" height="2.20" fill="#ff69b4"/>
<rect x="469.76" y="267.87" width="4.802" height="37.93" fill="#0b9994"/>
<rect x="469.76" y="233.90" width="4.802" height="33.97" fill="#4a00a2"/>
<rect x="469.76" y="212.52" width="4.802" height="21.39" fill="#07564f"/>
<rect x="469.76" y="305.80" width="4.802" height="1.80" fill="#8f9a3c"/>
<rect x="469.76" y="307.60" width="4.802" height="15.64" fill="#fca2b9"/>
<rect x="469.76" y="323.24" width="4.802" height="20.29" fill="#f7e27a"/>
<rect x="469.76" y="343.54" width="4.802" height="9.81" fill="#3f27a5"/>
<rect x="469.76" y="353.35" width="4.802" height="33.69" fill="#a8480a"/>
<rect x="469.76" y="387.04" width="4.802" height="2.20" fill="#ff69b4"/>
<rect x="474.56" y="267.87" width="4.802" height="37.93" fill="#0b9994"/>
<rect x="474.56" y="237.13" width="4.802" height="30.74" fill="#4a00a2"/>
<rect x="474.56" y="219.84" width="4.802" height="17.28" fill="#07564f"/>
<rect x="474.56" y="305.80" width="4.802" height="1.80" fill="#8f9a3c"/>
<rect x="474.56" y="307.60" width="4.802" height="15.68" fill="#fca2b9"/>
<rect x="474.56" y="323.28" width="4.802" height="20.26" fill="#f7e27a"/>
<rect x="474.56" y="343.54" width="4.802" height="9.81" fill="#3f27a5"/>
<rect x="474.56" y="353.35" width="4.802" height="32.66" fill="#a8480a"/>
<rect x="474.56" y="386.02" width="4.802" height="2.49" fill="#ff69b4"/>
<rect x="479.37" y="268.75" width="4.802" height="37.05" fill="#0b9994"/>
<rect x="479.37" y="238.59" width="4.802" height="30.16" fill="#4a00a2"/>
<rect x="479.37" y="222.19" width="4.802" height="16.41" fill="#07564f"/>
<rect x="479.37" y="305.80" width="4.802" height="1.80" fill="#8f9a3c"/>
<rect x="479.37" y="307.60" width="4.802" height="15.71" fill="#fca2b9"/>
<rect x="479.37" y="323.31" width="4.802" height="20.22" fill="#f7e27a"/>
<rect x="479.37" y="343.54" width="4.802" height="9.81" fill="#3f27a5"/>
<rect x="479.37" y="353.35" width="4.802" height="30.32" fill="#a8480a"/>
<rect x="479.37" y="383.67" width="4.802" height="2.64" fill="#ff69b4"/>
<rect x="484.17" y="269.33" width="4.802" height="36.47" fill="#0b9994"/>
<rect x="484.17" y="240.06" width="4.802" height="29.28" fill="#4a00a2"/>
<rect x="484.17" y="223.21" width="4.802" height="16.84" fill="#07564f"/>
<rect x="484.17" y="305.80" width="4.802" height="1.80" fill="#8f9a3c"/>
<rect x="484.17" y="307.60" width="4.802" height="15.75" fill="#fca2b9"/>
<rect x="484.17" y="323.35" width="4.802" height="20.19" fill="#f7e27a"/>
<rect x="484.17" y="343.54" width="4.802" height="9.81" fill="#3f27a5"/>
<rect x="484.17" y="353.35" width="4.802" height="30.32" fill="#a8480a"/>
<rect x="484.17" y="383.67" width="4.802" height="2.64" fill="#ff69b4"/>
<rect x="488.97" y="275.19" width="4.802" height="30.61" fill="#0b9994"/>
<rect x="488.97" y="246.65" width="4.802" height="28.55" fill="#4a00a2"/>
<rect x="488.97" y="230.53" width="4.802" height="16.11" fill="#07564f"/>
<rect x="488.97" y="305.80" width="4.802" height="1.80" fill="#8f9a3c"/>
<rect x="488.97" y="307.60" width="4.802" height="15.79" fill="#fca2b9"/>
<rect x="488.97" y="323.39" width="4.802" height="21.18" fill="#f7e27a"/>
<rect x="488.97" y="344.56" width="4.802" height="6.59" fill="#3f27a5"/>
<rect x="488.97" y="351.15" width="4.802" height="27.83" fill="#a8480a"/>
<rect x="488.97" y="378.99" width="4.802" height="3.66" fill="#ff69b4"/>
<rect x="493.77" y="277.83" width="4.802" height="27.97" fill="#0b9994"/>
<rect x="493.77" y="248.84" width="4.802" height="28.99" fill="#4a00a2"/>
<rect x="493.77" y="232.73" width="4.802" height="16.11" fill="#07564f"/>
<rect x="493.77" y="305.80" width="4.802" height="1.80" fill="#8f9a3c"/>
<rect x="493.77" y="307.60" width="4.802" height="15.82" fill="#fca2b9"/>
<rect x="493.77" y="323.42" width="4.802" height="20.93" fill="#f7e27a"/>
<rect x="493.77" y="344.35" width="4.802" height="6.15" fill="#3f27a5"/>
<rect x="493.77" y="350.51" width="4.802" height="25.63" fill="#a8480a"/>
<rect x="493.77" y="376.14" width="4.802" height="3.95" fill="#ff69b4"/>
<rect x="498.57" y="279.00" width="4.802" height="26.80" fill="#0b9994"/>
<rect x="498.57" y="249.58" width="4.802" height="29.43" fill="#4a00a2"/>
<rect x="498.57" y="233.02" width="4.802" height="16.55" fill="#07564f"/>
<rect x="498.57" y="305.80" width="4.802" height="1.80" fill="#8f9a3c"/>
<rect x="498.57" y="307.60" width="4.802" height="15.86" fill="#fca2b9"/>
<rect x="498.57" y="323.46" width="4.802" height="20.90" fill="#f7e27a"/>
<rect x="498.57" y="344.35" width="4.802" height="6.15" fill="#3f27a5"/>
<rect x="498.57" y="350.51" width="4.802" height="26.07" fill="#a8480a"/>
<rect x="498.57" y="376.58" width="4.802" height="3.95" fill="#ff69b4"/>
<rect x="503.38" y="280.03" width="4.802" height="25.77" fill="#0b9994"/>
<rect x="503.38" y="250.02" width="4.802" height="30.01" fill="#4a00a2"/>
<rect x="503.38" y="234.93" width="4.802" height="15.09" fill="#07564f"/>
<rect x="503.38" y="305.80" width="4.802" height="1.80" fill="#8f9a3c"/>
<rect x="503.38" y="307.60" width="4.802" height="15.89" fill="#fca2b9"/>
<rect x="503.38" y="323.49" width="4.802" height="20.86" fill="#f7e27a"/>
<rect x="503.38" y="344.35" width="4.802" height="6.15" fill="#3f27a5"/>
<rect x="503.38" y="350.51" width="4.802" height="26.66" fill="#a8480a"/>
<rect x="503.38" y="377.17" width="4.802" height="4.39" fill="#ff69b4"/>
<rect x="508.18" y="281.49" width="4.802" height="24.31" fill="#0b9994"/>
<rect x="508.18" y="253.24" width="4.802" height="28.25" fill="#4a00a2"/>
<rect x="508.18" y="239.76" width="4.802" height="13.48" fill="#07564f"/>
<rect x="508.18" y="305.80" width="4.802" height="1.80" fill="#8f9a3c"/>
<rect x="508.18" y="307.60" width="4.802" height="15.93" fill="#fca2b9"/>
<rect x="508.18" y="323.53" width="4.802" height="20.83" fill="#f7e27a"/>
<rect x="508.18" y="344.35" width="4.802" height="6.15" fill="#3f27a5"/>
<rect x="508.18" y="350.51" width="4.802" height="22.26" fill="#a8480a"/>
<rect x="508.18" y="372.77" width="4.802" height="4.83" fill="#ff69b4"/>
<rect x="512.98" y="282.22" width="4.802" height="23.58" fill="#0b9994"/>
<rect x="512.98" y="251.48" width="4.802" height="30.74" fill="#4a00a2"/>
<rect x="512.98" y="237.13" width="4.802" height="14.35" fill="#07564f"/>
<rect x="512.98" y="305.80" width="4.802" height="1.80" fill="#8f9a3c"/>
<rect x="512.98" y="307.60" width="4.802" height="15.96" fill="#fca2b9"/>
<rect x="512.98" y="323.56" width="4.802" height="20.79" fill="#f7e27a"/>
<rect x="512.98" y="344.35" width="4.802" height="6.15" fill="#3f27a5"/>
<rect x="512.98" y="350.51" width="4.802" height="23.44" fill="#a8480a"/>
<rect x="512.98" y="373.94" width="4.802" height="5.57" fill="#ff69b4"/>
<rect x="517.78" y="279.30" width="4.802" height="26.50" fill="#0b9994"/>
<rect x="517.78" y="247.67" width="4.802" height="31.62" fill="#4a00a2"/>
<rect x="517.78" y="234.20" width="4.802" height="13.48" fill="#07564f"/>
<rect x="517.78" y="305.80" width="4.802" height="1.80" fill="#8f9a3c"/>
<rect x="517.78" y="307.60" width="4.802" height="16.00" fill="#fca2b9"/>
<rect x="517.78" y="323.60" width="4.802" height="20.76" fill="#f7e27a"/>
<rect x="517.78" y="344.35" width="4.802" height="6.15" fill="#3f27a5"/>
<rect x="517.78" y="350.51" width="4.802" height="24.61" fill="#a8480a"/>
<rect x="517.78" y="375.11" width="4.802" height="6.88" fill="#ff69b4"/>
<rect x="522.58" y="300.53" width="4.802" height="5.27" fill="#0b9994"/>
<rect x="522.58" y="294.68" width="4.802" height="5.86" fill="#4a00a2"/>
<rect x="522.58" y="278.56" width="4.802" height="16.11" fill="#07564f"/>
<rect x="522.58" y="305.80" width="4.802" height="1.80" fill="#8f9a3c"/>
<rect x="522.58" y="307.60" width="4.802" height="16.03" fill="#fca2b9"/>
<rect x="522.58" y="323.63" width="4.802" height="23.94" fill="#f7e27a"/>
<rect x="522.58" y="347.58" width="4.802" height="8.79" fill="#ba6e0c"/>
<rect x="522.58" y="356.37" width="4.802" height="8.50" fill="#ff69b4"/>
<rect x="527.39" y="300.53" width="4.802" height="5.27" fill="#0b9994"/>
<rect x="527.39" y="294.68" width="4.802" height="5.86" fill="#4a00a2"/>
<rect x="527.39" y="274.90" width="4.802" height="19.77" fill="#07564f"/>
<rect x="527.39" y="305.80" width="4.802" height="1.80" fill="#8f9a3c"/>
<rect x="527.39" y="307.60" width="4.802" height="16.07" fill="#fca2b9"/>
<rect x="527.39" y="323.67" width="4.802" height="21.71" fill="#f7e27a"/>
<rect x="527.39" y="345.38" width="4.802" height="30.76" fill="#8fd0f2"/>
<rect x="527.39" y="376.14" width="4.802" height="11.72" fill="#ba6e0c"/>
<rect x="527.39" y="387.86" width="4.802" height="4.39" fill="#3f27a5"/>
<rect x="527.39" y="392.25" width="4.802" height="8.06" fill="#a8480a"/>
<rect x="527.39" y="400.31" width="4.802" height="9.08" fill="#ff69b4"/>
<rect x="532.19" y="280.76" width="4.802" height="25.04" fill="#0b9994"/>
<rect x="532.19" y="240.06" width="4.802" height="40.70" fill="#4a00a2"/>
<rect x="532.19" y="218.38" width="4.802" height="21.68" fill="#07564f"/>
<rect x="532.19" y="305.80" width="4.802" height="1.80" fill="#8f9a3c"/>
<rect x="532.19" y="307.60" width="4.802" height="16.10" fill="#fca2b9"/>
<rect x="532.19" y="323.70" width="4.802" height="36.32" fill="#f7e27a"/>
<rect x="532.19" y="360.03" width="4.802" height="11.72" fill="#3f27a5"/>
<rect x="532.19" y="371.75" width="4.802" height="26.81" fill="#a8480a"/>
<rect x="532.19" y="398.55" width="4.802" height="9.08" fill="#ff69b4"/>
<rect x="536.99" y="278.56" width="4.802" height="27.24" fill="#0b9994"/>
<rect x="536.99" y="235.66" width="4.802" height="42.90" fill="#4a00a2"/>
<rect x="536.99" y="208.86" width="4.802" height="26.81" fill="#07564f"/>
<rect x="536.99" y="305.80" width="4.802" height="1.80" fill="#8f9a3c"/>
<rect x="536.99" y="307.60" width="4.802" height="16.14" fill="#fca2b9"/>
<rect x="536.99" y="323.74" width="4.802" height="36.29" fill="#f7e27a"/>
<rect x="536.99" y="360.03" width="4.802" height="8.06" fill="#3f27a5"/>
<rect x="536.99" y="368.08" width="4.802" height="31.05" fill="#a8480a"/>
<rect x="536.99" y="399.14" width="4.802" height="9.96" fill="#ff69b4"/>
<rect x="541.79" y="275.63" width="4.802" height="30.17" fill="#0b9994"/>
<rect x="541.79" y="233.46" width="4.802" height="42.17" fill="#4a00a2"/>
<rect x="541.79" y="212.96" width="4.802" height="20.51" fill="#07564f"/>
<rect x="541.79" y="305.80" width="4.802" height="1.80" fill="#8f9a3c"/>
<rect x="541.79" y="307.60" width="4.802" height="16.17" fill="#fca2b9"/>
<rect x="541.79" y="323.77" width="4.802" height="36.25" fill="#f7e27a"/>
<rect x="541.79" y="360.03" width="4.802" height="8.06" fill="#3f27a5"/>
<rect x="541.79" y="368.08" width="4.802" height="29.30" fill="#a8480a"/>
<rect x="541.79" y="397.38" width="4.802" height="10.99" fill="#ff69b4"/>
<rect x="546.59" y="273.44" width="4.802" height="32.36" fill="#0b9994"/>
<rect x="546.59" y="227.61" width="4.802" height="45.83" fill="#4a00a2"/>
<rect x="546.59" y="205.63" width="4.802" height="21.97" fill="#07564f"/>
<rect x="546.59" y="305.80" width="4.802" height="1.80" fill="#8f9a3c"/>
<rect x="546.59" y="307.60" width="4.802" height="16.21" fill="#fca2b9"/>
<rect x="546.59" y="323.81" width="4.802" height="36.22" fill="#f7e27a"/>
<rect x="546.59" y="360.03" width="4.802" height="8.06" fill="#3f27a5"/>
<rect x="546.59" y="368.08" width="4.802" height="33.41" fill="#a8480a"/>
<rect x="546.59" y="401.49" width="4.802" height="19.77" fill="#ff69b4"/>
<rect x="551.40" y="266.11" width="4.802" height="39.69" fill="#0b9994"/>
<rect x="551.40" y="217.35" width="4.802" height="48.76" fill="#4a00a2"/>
<rect x="551.40" y="197.28" width="4.802" height="20.07" fill="#07564f"/>
<rect x="551.40" y="305.80" width="4.802" height="1.80" fill="#8f9a3c"/>
<rect x="551.40" y="307.60" width="4.802" height="16.25" fill="#fca2b9"/>
<rect x="551.40" y="323.85" width="4.802" height="21.53" fill="#f7e27a"/>
<rect x="551.40" y="345.38" width="4.802" height="9.81" fill="#3f27a5"/>
<rect x="551.40" y="355.19" width="4.802" height="34.13" fill="#a8480a"/>
<rect x="551.40" y="389.32" width="4.802" height="10.69" fill="#ff69b4"/>
<rect x="556.20" y="263.18" width="4.802" height="42.62" fill="#0b9994"/>
<rect x="556.20" y="211.49" width="4.802" height="51.69" fill="#4a00a2"/>
<rect x="556.20" y="191.43" width="4.802" height="20.07" fill="#07564f"/>
<rect x="556.20" y="305.80" width="4.802" height="1.80" fill="#8f9a3c"/>
<rect x="556.20" y="307.60" width="4.802" height="16.28" fill="#fca2b9"/>
<rect x="556.20" y="323.88" width="4.802" height="21.50" fill="#f7e27a"/>
<rect x="556.20" y="345.38" width="4.802" height="9.81" fill="#3f27a5"/>
<rect x="556.20" y="355.19" width="4.802" height="37.79" fill="#a8480a"/>
<rect x="556.20" y="392.99" width="4.802" height="10.25" fill="#ff69b4"/>
<rect x="561.00" y="261.72" width="4.802" height="44.08" fill="#0b9994"/>
<rect x="561.00" y="209.30" width="4.802" height="52.42" fill="#4a00a2"/>
<rect x="561.00" y="189.52" width="4.802" height="19.77" fill="#07564f"/>
<rect x="561.00" y="305.80" width="4.802" height="1.80" fill="#8f9a3c"/>
<rect x="561.00" y="307.60" width="4.802" height="16.32" fill="#fca2b9"/>
<rect x="561.00" y="323.92" width="4.802" height="21.46" fill="#f7e27a"/>
<rect x="561.00" y="345.38" width="4.802" height="9.81" fill="#3f27a5"/>
<rect x="561.00" y="355.19" width="4.802" height="39.99" fill="#a8480a"/>
<rect x="561.00" y="395.18" width="4.802" height="10.99" fill="#ff69b4"/>
<rect x="565.80" y="264.65" width="4.802" height="41.15" fill="#0b9994"/>
<rect x="565.80" y="212.52" width="4.802" height="52.13" fill="#4a00a2"/>
<rect x="565.80" y="196.41" width="4.802" height="16.11" fill="#07564f"/>
<rect x="565.80" y="305.80" width="4.802" height="1.80" fill="#8f9a3c"/>
<rect x="565.80" y="307.60" width="4.802" height="16.35" fill="#fca2b9"/>
<rect x="565.80" y="323.95" width="4.802" height="21.43" fill="#f7e27a"/>
<rect x="565.80" y="345.38" width="4.802" height="9.81" fill="#3f27a5"/>
<rect x="565.80" y="355.19" width="4.802" height="37.06" fill="#a8480a"/>
<rect x="565.80" y="392.25" width="4.802" height="10.69" fill="#ff69b4"/>
<rect x="570.60" y="262.89" width="4.802" height="42.91" fill="#0b9994"/>
<rect x="570.60" y="211.05" width="4.802" height="51.84" fill="#4a00a2"/>
<rect x="570.60" y="195.38" width="4.802" height="15.67" fill="#07564f"/>
<rect x="570.60" y="305.80" width="4.802" height="1.80" fill="#8f9a3c"/>
<rect x="570.60" y="307.60" width="4.802" height="16.39" fill="#fca2b9"/>
<rect x="570.60" y="323.99" width="4.802" height="21.39" fill="#f7e27a"/>
<rect x="570.60" y="345.38" width="4.802" height="9.81" fill="#3f27a5"/>
<rect x="570.60" y="355.19" width="4.802" height="37.06" fill="#a8480a"/>
<rect x="570.60" y="392.25" width="4.802" height="10.25" fill="#ff69b4"/>
<rect x="575.41" y="263.18" width="4.802" height="42.62" fill="#0b9994"/>
<rect x="575.41" y="212.52" width="4.802" height="50.67" fill="#4a00a2"/>
<rect x="575.41" y="195.38" width="4.802" height="17.14" fill="#07564f"/>
<rect x="575.41" y="305.80" width="4.802" height="1.80" fill="#8f9a3c"/>
<rect x="575.41" y="307.60" width="4.802" height="16.42" fill="#fca2b9"/>
<rect x="575.41" y="324.02" width="4.802" height="21.36" fill="#f7e27a"/>
<rect x="575.41" y="345.38" width="4.802" height="9.81" fill="#3f27a5"/>
<rect x="575.41" y="355.19" width="4.802" height="38.52" fill="#a8480a"/>
<rect x="575.41" y="393.72" width="4.802" height="9.23" fill="#ff69b4"/>
<rect x="580.21" y="263.18" width="4.802" height="42.62" fill="#0b9994"/>
<rect x="580.21" y="212.96" width="4.802" height="50.23" fill="#4a00a2"/>
<rect x="580.21" y="196.84" width="4.802" height="16.11" fill="#07564f"/>
<rect x="580.21" y="305.80" width="4.802" height="1.80" fill="#8f9a3c"/>
<rect x="580.21" y="307.60" width="4.802" height="16.46" fill="#fca2b9"/>
<rect x="580.21" y="324.06" width="4.802" height="21.32" fill="#f7e27a"/>
<rect x="580.21" y="345.38" width="4.802" height="9.81" fill="#3f27a5"/>
<rect x="580.21" y="355.19" width="4.802" height="37.79" fill="#a8480a"/>
<rect x="580.21" y="392.99" width="4.802" height="8.79" fill="#ff69b4"/>
<rect x="585.01" y="263.48" width="4.802" height="42.32" fill="#0b9994"/>
<rect x="585.01" y="212.96" width="4.802" height="50.52" fill="#4a00a2"/>
<rect x="585.01" y="196.11" width="4.802" height="16.84" fill="#07564f"/>
<rect x="585.01" y="305.80" width="4.802" height="1.80" fill="#8f9a3c"/>
<rect x="585.01" y="307.60" width="4.802" height="16.49" fill="#fca2b9"/>
<rect x="585.01" y="324.09" width="4.802" height="21.29" fill="#f7e27a"/>
<rect x="585.01" y="345.38" width="4.802" height="9.81" fill="#3f27a5"/>
<rect x="585.01" y="355.19" width="4.802" height="38.52" fill="#a8480a"/>
<rect x="585.01" y="393.72" width="4.802" height="8.06" fill="#ff69b4"/>
<rect x="589.81" y="263.48" width="4.802" height="42.32" fill="#0b9994"/>
<rect x="589.81" y="213.40" width="4.802" height="50.08" fill="#4a00a2"/>
<rect x="589.81" y="197.28" width="4.802" height="16.11" fill="#07564f"/>
<rect x="589.81" y="305.80" width="4.802" height="1.80" fill="#8f9a3c"/>
<rect x="589.81" y="307.60" width="4.802" height="16.53" fill="#fca2b9"/>
<rect x="589.81" y="324.13" width="4.802" height="21.25" fill="#f7e27a"/>
<rect x="589.81" y="345.38" width="4.802" height="9.81" fill="#3f27a5"/>
<rect x="589.81" y="355.19" width="4.802" height="38.52" fill="#a8480a"/>
<rect x="589.81" y="393.72" width="4.802" height="8.06" fill="#ff69b4"/>
<rect x="594.61" y="263.92" width="4.802" height="41.88" fill="#0b9994"/>
<rect x="594.61" y="213.40" width="4.802" height="50.52" fill="#4a00a2"/>
<rect x="594.61" y="197.87" width="4.802" height="15.53" fill="#07564f"/>
<rect x="594.61" y="305.80" width="4.802" height="1.80" fill="#8f9a3c"/>
<rect x="594.61" y="307.60" width="4.802" height="16.56" fill="#fca2b9"/>
<rect x="594.61" y="324.16" width="4.802" height="21.22" fill="#f7e27a"/>
<rect x="594.61" y="345.38" width="4.802" height="9.81" fill="#3f27a5"/>
<rect x="594.61" y="355.19" width="4.802" height="38.08" fill="#a8480a"/>
<rect x="594.61" y="393.28" width="4.802" height="7.76" fill="#ff69b4"/>
<rect x="599.42" y="263.18" width="4.802" height="42.62" fill="#0b9994"/>
<rect x="599.42" y="213.98" width="4.802" height="49.20" fill="#4a00a2"/>
<rect x="599.42" y="198.75" width="4.802" height="15.23" fill="#07564f"/>
<rect x="599.42" y="305.80" width="4.802" height="1.80" fill="#8f9a3c"/>
<rect x="599.42" y="307.60" width="4.802" height="16.60" fill="#fca2b9"/>
<rect x="599.42" y="324.20" width="4.802" height="21.18" fill="#f7e27a"/>
<rect x="599.42" y="345.38" width="4.802" height="9.81" fill="#3f27a5"/>
<rect x="599.42" y="355.19" width="4.802" height="35.59" fill="#a8480a"/>
<rect x="599.42" y="390.79" width="4.802" height="7.76" fill="#ff69b4"/>
<rect x="604.22" y="305.80" width="4.802" height="20.70" fill="#f7e27a"/>
<rect x="609.02" y="305.80" width="4.802" height="20.70" fill="#f7e27a"/>
<rect x="613.82" y="305.80" width="4.802" height="20.70" fill="#f7e27a"/>
<rect x="618.62" y="305.80" width="4.802" height="20.70" fill="#f7e27a"/>
<rect x="623.43" y="305.80" width="4.802" height="20.70" fill="#f7e27a"/>
<rect x="628.23" y="305.80" width="4.802" height="20.70" fill="#f7e27a"/>
<rect x="633.03" y="305.80" width="4.802" height="20.70" fill="#f7e27a"/>
<rect x="637.83" y="305.80" width="4.802" height="20.70" fill="#f7e27a"/>
<rect x="642.63" y="305.80" width="4.802" height="20.70" fill="#f7e27a"/>
<rect x="647.44" y="305.80" width="4.802" height="20.70" fill="#f7e27a"/>
<rect x="652.24" y="305.80" width="4.802" height="20.70" fill="#f7e27a"/>
<rect x="657.04" y="305.80" width="4.802" height="20.70" fill="#f7e27a"/>
<rect x="80.30" y="252.92" width="1" height="93.04" fill="#000" fill-opacity="0.23"/>
<rect x="85.10" y="252.92" width="1" height="93.48" fill="#000" fill-opacity="0.23"/>
<rect x="89.90" y="256.87" width="1" height="89.52" fill="#000" fill-opacity="0.23"/>
<rect x="94.71" y="234.61" width="1" height="115.74" fill="#000" fill-opacity="0.23"/>
<rect x="99.51" y="234.61" width="1" height="116.91" fill="#000" fill-opacity="0.23"/>
<rect x="104.31" y="225.82" width="1" height="126.43" fill="#000" fill-opacity="0.23"/>
<rect x="109.11" y="222.89" width="1" height="131.12" fill="#000" fill-opacity="0.23"/>
<rect x="113.91" y="222.89" width="1" height="131.12" fill="#000" fill-opacity="0.23"/>
<rect x="118.72" y="235.63" width="1" height="115.15" fill="#000" fill-opacity="0.23"/>
<rect x="123.52" y="249.84" width="1" height="99.19" fill="#000" fill-opacity="0.23"/>
<rect x="128.32" y="248.38" width="1" height="100.65" fill="#000" fill-opacity="0.23"/>
<rect x="133.12" y="248.38" width="1" height="100.95" fill="#000" fill-opacity="0.23"/>
<rect x="137.92" y="248.67" width="1" height="101.09" fill="#000" fill-opacity="0.23"/>
<rect x="142.73" y="248.67" width="1" height="102.12" fill="#000" fill-opacity="0.23"/>
<rect x="147.53" y="251.31" width="1" height="99.48" fill="#000" fill-opacity="0.23"/>
<rect x="152.33" y="252.04" width="1" height="98.75" fill="#000" fill-opacity="0.23"/>
<rect x="157.13" y="251.89" width="1" height="98.90" fill="#000" fill-opacity="0.23"/>
<rect x="161.93" y="251.89" width="1" height="98.90" fill="#000" fill-opacity="0.23"/>
<rect x="166.74" y="254.97" width="1" height="95.53" fill="#000" fill-opacity="0.23"/>
<rect x="171.54" y="257.90" width="1" height="91.43" fill="#000" fill-opacity="0.23"/>
<rect x="176.34" y="262.29" width="1" height="86.01" fill="#000" fill-opacity="0.23"/>
<rect x="181.14" y="265.66" width="1" height="81.46" fill="#000" fill-opacity="0.23"/>
<rect x="185.94" y="268.59" width="1" height="78.24" fill="#000" fill-opacity="0.23"/>
<rect x="190.75" y="270.35" width="1" height="76.48" fill="#000" fill-opacity="0.23"/>
<rect x="195.55" y="275.48" width="1" height="71.36" fill="#000" fill-opacity="0.23"/>
<rect x="200.35" y="277.38" width="1" height="68.57" fill="#000" fill-opacity="0.23"/>
<rect x="205.15" y="277.38" width="1" height="68.57" fill="#000" fill-opacity="0.23"/>
<rect x="209.95" y="277.38" width="1" height="68.72" fill="#000" fill-opacity="0.23"/>
<rect x="214.76" y="268.59" width="1" height="78.24" fill="#000" fill-opacity="0.23"/>
<rect x="219.56" y="268.59" width="1" height="78.83" fill="#000" fill-opacity="0.23"/>
<rect x="224.36" y="270.06" width="1" height="77.36" fill="#000" fill-opacity="0.23"/>
<rect x="229.16" y="270.06" width="1" height="77.66" fill="#000" fill-opacity="0.23"/>
<rect x="233.96" y="270.06" width="1" height="77.95" fill="#000" fill-opacity="0.23"/>
<rect x="238.77" y="272.25" width="1" height="78.10" fill="#000" fill-opacity="0.23"/>
<rect x="243.57" y="280.31" width="1" height="71.21" fill="#000" fill-opacity="0.23"/>
<rect x="248.37" y="281.77" width="1" height="70.48" fill="#000" fill-opacity="0.23"/>
<rect x="253.17" y="256.87" width="1" height="97.58" fill="#000" fill-opacity="0.23"/>
<rect x="257.97" y="256.87" width="1" height="99.04" fill="#000" fill-opacity="0.23"/>
<rect x="262.78" y="256.58" width="1" height="132.72" fill="#000" fill-opacity="0.23"/>
<rect x="267.58" y="255.70" width="1" height="135.06" fill="#000" fill-opacity="0.23"/>
<rect x="272.38" y="254.24" width="1" height="137.99" fill="#000" fill-opacity="0.23"/>
<rect x="277.18" y="253.21" width="1" height="140.77" fill="#000" fill-opacity="0.23"/>
<rect x="281.98" y="252.19" width="1" height="146.19" fill="#000" fill-opacity="0.23"/>
<rect x="286.79" y="252.19" width="1" height="146.19" fill="#000" fill-opacity="0.23"/>
<rect x="291.59" y="252.48" width="1" height="146.63" fill="#000" fill-opacity="0.23"/>
<rect x="296.39" y="253.36" width="1" height="145.75" fill="#000" fill-opacity="0.23"/>
<rect x="301.19" y="253.36" width="1" height="145.46" fill="#000" fill-opacity="0.23"/>
<rect x="305.99" y="253.06" width="1" height="143.56" fill="#000" fill-opacity="0.23"/>
<rect x="310.80" y="252.48" width="1" height="144.58" fill="#000" fill-opacity="0.23"/>
<rect x="315.60" y="251.75" width="1" height="145.61" fill="#000" fill-opacity="0.23"/>
<rect x="320.40" y="251.45" width="1" height="145.90" fill="#000" fill-opacity="0.23"/>
<rect x="325.20" y="251.45" width="1" height="145.90" fill="#000" fill-opacity="0.23"/>
<rect x="330.00" y="251.75" width="1" height="150.73" fill="#000" fill-opacity="0.23"/>
<rect x="334.81" y="251.31" width="1" height="154.83" fill="#000" fill-opacity="0.23"/>
<rect x="339.61" y="248.82" width="1" height="161.72" fill="#000" fill-opacity="0.23"/>
<rect x="344.41" y="243.40" width="1" height="170.07" fill="#000" fill-opacity="0.23"/>
<rect x="349.21" y="239.30" width="1" height="176.66" fill="#000" fill-opacity="0.23"/>
<rect x="354.01" y="236.39" width="1" height="181.76" fill="#000" fill-opacity="0.23"/>
<rect x="358.82" y="230.53" width="1" height="194.35" fill="#000" fill-opacity="0.23"/>
<rect x="363.62" y="215.15" width="1" height="209.73" fill="#000" fill-opacity="0.23"/>
<rect x="368.42" y="210.32" width="1" height="194.54" fill="#000" fill-opacity="0.23"/>
<rect x="373.22" y="210.32" width="1" height="194.54" fill="#000" fill-opacity="0.23"/>
<rect x="378.02" y="206.07" width="1" height="182.43" fill="#000" fill-opacity="0.23"/>
<rect x="382.83" y="200.21" width="1" height="190.49" fill="#000" fill-opacity="0.23"/>
<rect x="387.63" y="196.11" width="1" height="201.18" fill="#000" fill-opacity="0.23"/>
<rect x="392.43" y="196.11" width="1" height="201.18" fill="#000" fill-opacity="0.23"/>
<rect x="397.23" y="207.54" width="1" height="183.90" fill="#000" fill-opacity="0.23"/>
<rect x="402.03" y="211.49" width="1" height="177.01" fill="#000" fill-opacity="0.23"/>
<rect x="406.84" y="210.47" width="1" height="177.31" fill="#000" fill-opacity="0.23"/>
<rect x="411.64" y="210.47" width="1" height="177.60" fill="#000" fill-opacity="0.23"/>
<rect x="416.44" y="208.56" width="1" height="180.38" fill="#000" fill-opacity="0.23"/>
<rect x="421.24" y="208.56" width="1" height="180.68" fill="#000" fill-opacity="0.23"/>
<rect x="426.04" y="208.56" width="1" height="182.14" fill="#000" fill-opacity="0.23"/>
<rect x="430.85" y="204.90" width="1" height="187.56" fill="#000" fill-opacity="0.23"/>
<rect x="435.65" y="204.90" width="1" height="187.56" fill="#000" fill-opacity="0.23"/>
<rect x="440.45" y="204.90" width="1" height="187.71" fill="#000" fill-opacity="0.23"/>
<rect x="445.25" y="204.90" width="1" height="187.71" fill="#000" fill-opacity="0.23"/>
<rect x="450.05" y="206.07" width="1" height="186.53" fill="#000" fill-opacity="0.23"/>
<rect x="454.86" y="206.37" width="1" height="186.24" fill="#000" fill-opacity="0.23"/>
<rect x="459.66" y="207.10" width="1" height="185.07" fill="#000" fill-opacity="0.23"/>
<rect x="464.46" y="210.32" width="1" height="180.68" fill="#000" fill-opacity="0.23"/>
<rect x="469.26" y="211.49" width="1" height="179.21" fill="#000" fill-opacity="0.23"/>
<rect x="474.06" y="212.52" width="1" height="176.72" fill="#000" fill-opacity="0.23"/>
<rect x="478.87" y="219.84" width="1" height="168.66" fill="#000" fill-opacity="0.23"/>
<rect x="483.67" y="222.19" width="1" height="164.12" fill="#000" fill-opacity="0.23"/>
<rect x="488.47" y="223.21" width="1" height="163.10" fill="#000" fill-opacity="0.23"/>
<rect x="493.27" y="230.53" width="1" height="152.11" fill="#000" fill-opacity="0.23"/>
<rect x="498.07" y="232.73" width="1" height="147.80" fill="#000" fill-opacity="0.23"/>
<rect x="502.88" y="233.02" width="1" height="148.54" fill="#000" fill-opacity="0.23"/>
<rect x="507.68" y="234.93" width="1" height="146.63" fill="#000" fill-opacity="0.23"/>
<rect x="512.48" y="237.13" width="1" height="142.38" fill="#000" fill-opacity="0.23"/>
<rect x="517.28" y="234.20" width="1" height="147.80" fill="#000" fill-opacity="0.23"/>
<rect x="522.08" y="234.20" width="1" height="147.80" fill="#000" fill-opacity="0.23"/>
<rect x="526.89" y="274.90" width="1" height="134.49" fill="#000" fill-opacity="0.23"/>
<rect x="531.69" y="218.38" width="1" height="191.01" fill="#000" fill-opacity="0.23"/>
<rect x="536.49" y="208.86" width="1" height="200.24" fill="#000" fill-opacity="0.23"/>
<rect x="541.29" y="208.86" width="1" height="200.24" fill="#000" fill-opacity="0.23"/>
<rect x="546.09" y="205.63" width="1" height="215.63" fill="#000" fill-opacity="0.23"/>
<rect x="550.90" y="197.28" width="1" height="223.98" fill="#000" fill-opacity="0.23"/>
<rect x="555.70" y="191.43" width="1" height="211.81" fill="#000" fill-opacity="0.23"/>
<rect x="560.50" y="189.52" width="1" height="216.65" fill="#000" fill-opacity="0.23"/>
<rect x="565.30" y="189.52" width="1" height="216.65" fill="#000" fill-opacity="0.23"/>
<rect x="570.10" y="195.38" width="1" height="207.57" fill="#000" fill-opacity="0.23"/>
<rect x="574.91" y="195.38" width="1" height="207.57" fill="#000" fill-opacity="0.23"/>
<rect x="579.71" y="195.38" width="1" height="207.57" fill="#000" fill-opacity="0.23"/>
<rect x="584.51" y="196.11" width="1" height="205.66" fill="#000" fill-opacity="0.23"/>
<rect x="589.31" y="196.11" width="1" height="205.66" fill="#000" fill-opacity="0.23"/>
<rect x="594.11" y="197.28" width="1" height="204.49" fill="#000" fill-opacity="0.23"/>
<rect x="598.92" y="197.87" width="1" height="203.17" fill="#000" fill-opacity="0.23"/>
<rect x="603.72" y="198.75" width="1" height="199.80" fill="#000" fill-opacity="0.23"/>
<rect x="608.52" y="305.80" width="1" height="20.70" fill="#000" fill-opacity="0.23"/>
<rect x="613.32" y="305.80" width="1" height="20.70" fill="#000" fill-opacity="0.23"/>
<rect x="618.12" y="305.80" width="1" height="20.70" fill="#000" fill-opacity="0.23"/>
<rect x="622.93" y="305.80" width="1" height="20.70" fill="#000" fill-opacity="0.23"/>
<rect x="627.73" y="305.80" width="1" height="20.70" fill="#000" fill-opacity="0.23"/>
<rect x="632.53" y="305.80" width="1" height="20.70" fill="#000" fill-opacity="0.23"/>
<rect x="637.33" y="305.80" width="1" height="20.70" fill="#000" fill-opacity="0.23"/>
<rect x="642.13" y="305.80" width="1" height="20.70" fill="#000" fill-opacity="0.23"/>
<rect x="646.94" y="305.80" width="1" height="20.70" fill="#000" fill-opacity="0.23"/>
<rect x="651.74" y="305.80" width="1" height="20.70" fill="#000" fill-opacity="0.23"/>
<rect x="656.54" y="305.80" width="1" height="20.70" fill="#000" fill-opacity="0.23"/>
<rect x="661.34" y="305.80" width="1" height="20.70" fill="#000" fill-opacity="0.23"/>
<rect x="598.8" y="137.7" width="1" height="296.7" fill="#d02020" opacity="0.4"/>
<text x="60.5" y="427.8" font-size="9.3" fill="#f0f0f0" text-anchor="middle" font-weight="bold" >-40</text>
<text x="60.5" y="398.15" font-size="9.3" fill="#f0f0f0" text-anchor="middle" font-weight="bold" >-30</text>
<text x="60.5" y="368.5" font-size="9.3" fill="#f0f0f0" text-anchor="middle" font-weight="bold" >-20</text>
<text x="60.5" y="338.85" font-size="9.3" fill="#f0f0f0" text-anchor="middle" font-weight="bold" >-10</text>
<text x="60.5" y="309.2" font-size="9.3" fill="#f0f0f0" text-anchor="middle" font-weight="bold" >0</text>
<text x="60.5" y="279.55" font-size="9.3" fill="#f0f0f0" text-anchor="middle" font-weight="bold" >10</text>
<text x="60.5" y="249.9" font-size="9.3" fill="#f0f0f0" text-anchor="middle" font-weight="bold" >20</text>
<text x="60.5" y="220.25" font-size="9.3" fill="#f0f0f0" text-anchor="middle" font-weight="bold" >30</text>
<text x="60.5" y="190.6" font-size="9.3" fill="#f0f0f0" text-anchor="middle" font-weight="bold" >40</text>
<text x="60.5" y="160.95" font-size="9.3" fill="#f0f0f0" text-anchor="middle" font-weight="bold" >50</text>
<text x="83.2" y="449.7" font-size="9.1" fill="#f0f0f0" text-anchor="middle" font-weight="bold" textLength="21.2" lengthAdjust="spacingAndGlyphs" >1980</text>
<text x="198.52" y="449.7" font-size="9.1" fill="#f0f0f0" text-anchor="middle" font-weight="bold" textLength="21.2" lengthAdjust="spacingAndGlyphs" >1982</text>
<text x="313.84" y="449.7" font-size="9.1" fill="#f0f0f0" text-anchor="middle" font-weight="bold" textLength="21.2" lengthAdjust="spacingAndGlyphs" >1984</text>
<text x="429.16" y="449.7" font-size="9.1" fill="#f0f0f0" text-anchor="middle" font-weight="bold" textLength="21.2" lengthAdjust="spacingAndGlyphs" >1986</text>
<text x="544.48" y="449.7" font-size="9.1" fill="#f0f0f0" text-anchor="middle" font-weight="bold" textLength="21.2" lengthAdjust="spacingAndGlyphs" >1988</text>
<text x="659.8" y="449.7" font-size="9.1" fill="#f0f0f0" text-anchor="middle" font-weight="bold" textLength="21.2" lengthAdjust="spacingAndGlyphs" >1990</text>
<text x="371.3" y="472.4" font-size="10.2" fill="#e6e6e6" text-anchor="middle" font-weight="normal" textLength="22" lengthAdjust="spacingAndGlyphs" >Year</text>
<text transform="translate(31.3,317.2) rotate(-90)" font-size="10.4" fill="#e6e6e6" textLength="61.8" lengthAdjust="spacingAndGlyphs">Money [$M]</text>
<path d="M869.50 161.20 L869.50 74.60 A86.6 86.6 0 0 1 934.34 103.79 Z" fill="#07544e" stroke="#0a0a0a" stroke-width="0.75" stroke-linejoin="round"/>
<path d="M869.50 161.20 L934.34 103.79 A86.6 86.6 0 0 1 853.05 246.22 Z" fill="#0b9994" stroke="#0a0a0a" stroke-width="0.75" stroke-linejoin="round"/>
<path d="M869.50 161.20 L853.05 246.22 A86.6 86.6 0 0 1 863.72 74.79 Z" fill="#4a00a2" stroke="#0a0a0a" stroke-width="0.75" stroke-linejoin="round"/>
<path d="M869.50 161.20 L863.72 74.79 A86.6 86.6 0 0 1 869.50 74.60 Z" fill="#f7ec3a" stroke="#0a0a0a" stroke-width="0.75" stroke-linejoin="round"/>
<text x="890.8" y="117" font-size="10" fill="#f4f4f4" text-anchor="middle" font-weight="normal" textLength="31" lengthAdjust="spacingAndGlyphs" stroke="#f4f4f4" stroke-width="0.25">$4.90M</text>
<text x="825.8" y="162" font-size="10" fill="#f4f4f4" text-anchor="middle" font-weight="normal" textLength="31" lengthAdjust="spacingAndGlyphs" stroke="#f4f4f4" stroke-width="0.25">$16.7M</text>
<text x="907" y="187" font-size="10" fill="#f4f4f4" text-anchor="middle" font-weight="normal" textLength="31" lengthAdjust="spacingAndGlyphs" stroke="#f4f4f4" stroke-width="0.25">$14.4M</text>
<path d="M869.30 419.00 L869.30 358.00 A61 61 0 0 1 890.41 361.77 Z" fill="#07544e" stroke="#0a0a0a" stroke-width="0.75" stroke-linejoin="round"/>
<path d="M869.30 419.00 L890.41 361.77 A61 61 0 0 1 927.27 400.03 Z" fill="#0b9994" stroke="#0a0a0a" stroke-width="0.75" stroke-linejoin="round"/>
<path d="M869.30 419.00 L927.27 400.03 A61 61 0 0 1 930.21 422.34 Z" fill="#ff69b4" stroke="#0a0a0a" stroke-width="0.75" stroke-linejoin="round"/>
<path d="M869.30 419.00 L930.21 422.34 A61 61 0 0 1 927.85 436.12 Z" fill="#ffb3e0" stroke="#0a0a0a" stroke-width="0.75" stroke-linejoin="round"/>
<path d="M869.30 419.00 L927.85 436.12 A61 61 0 0 1 894.20 474.69 Z" fill="#4a00a2" stroke="#0a0a0a" stroke-width="0.75" stroke-linejoin="round"/>
<path d="M869.30 419.00 L894.20 474.69 A61 61 0 0 1 873.39 479.86 Z" fill="#07544e" stroke="#0a0a0a" stroke-width="0.75" stroke-linejoin="round"/>
<path d="M869.30 419.00 L873.39 479.86 A61 61 0 0 1 843.03 474.05 Z" fill="#0b9994" stroke="#0a0a0a" stroke-width="0.75" stroke-linejoin="round"/>
<path d="M869.30 419.00 L843.03 474.05 A61 61 0 0 1 822.70 458.37 Z" fill="#ff69b4" stroke="#0a0a0a" stroke-width="0.75" stroke-linejoin="round"/>
<path d="M869.30 419.00 L822.70 458.37 A61 61 0 0 1 819.04 453.57 Z" fill="#a8a838" stroke="#0a0a0a" stroke-width="0.75" stroke-linejoin="round"/>
<path d="M869.30 419.00 L819.04 453.57 A61 61 0 0 1 818.92 384.61 Z" fill="#f7e27a" stroke="#0a0a0a" stroke-width="0.75" stroke-linejoin="round"/>
<path d="M869.30 419.00 L818.92 384.61 A61 61 0 0 1 869.30 358.00 Z" fill="#ffa9c0" stroke="#0a0a0a" stroke-width="0.75" stroke-linejoin="round"/>
<text x="852.5" y="391" font-size="10" fill="#f4f4f4" text-anchor="middle" font-weight="normal" textLength="31" lengthAdjust="spacingAndGlyphs" stroke="#f4f4f4" stroke-width="0.25">$5.50M</text>
<text x="836" y="423" font-size="10" fill="#f4f4f4" text-anchor="middle" font-weight="normal" textLength="31" lengthAdjust="spacingAndGlyphs" stroke="#f4f4f4" stroke-width="0.25">$6.80M</text>
<rect x="729.6" y="59.4" width="11.6" height="11.6" fill="#2e2e2e" />
<rect x="730.8" y="60.5" width="9.2" height="9.2" fill="#07544e" />
<rect x="742.9" y="59.4" width="39.5" height="11.6" fill="#2f2f2f" />
<text x="745.9" y="67.2" font-size="5.9" fill="#dedede" text-anchor="start" font-weight="bold" textLength="33.1" lengthAdjust="spacingAndGlyphs" >Dab: $4.90M</text>
<rect x="783.8" y="59.4" width="11.6" height="11.6" fill="#2e2e2e" />
<rect x="785" y="60.5" width="9.2" height="9.2" fill="#0b9994" />
<rect x="797" y="59.4" width="49.4" height="11.6" fill="#2f2f2f" />
<text x="800" y="67.2" font-size="5.9" fill="#dedede" text-anchor="start" font-weight="bold" textLength="43" lengthAdjust="spacingAndGlyphs" >Duckbill: $14.4M</text>
<rect x="848.4" y="59.4" width="11.6" height="11.6" fill="#2e2e2e" />
<rect x="849.6" y="60.5" width="9.2" height="9.2" fill="#4a00a2" />
<rect x="861" y="59.4" width="48.4" height="11.6" fill="#2f2f2f" />
<text x="864" y="67.2" font-size="5.9" fill="#dedede" text-anchor="start" font-weight="bold" textLength="42" lengthAdjust="spacingAndGlyphs" >Racoon: $16.7M</text>
<rect x="911.4" y="59.4" width="11.6" height="11.6" fill="#2e2e2e" />
<rect x="912.6" y="60.5" width="9.2" height="9.2" fill="#f7ec3a" />
<rect x="924" y="59.4" width="40.4" height="11.6" fill="#2f2f2f" />
<text x="927" y="67.2" font-size="5.9" fill="#dedede" text-anchor="start" font-weight="bold" textLength="34" lengthAdjust="spacingAndGlyphs" >Other: $387k</text>
<rect x="730" y="290.9" width="11.6" height="11.6" fill="#2e2e2e" />
<rect x="731.2" y="292" width="9.2" height="9.2" fill="#07544e" />
<rect x="742.9" y="290.9" width="70.5" height="11.6" fill="#2f2f2f" />
<text x="745.9" y="298.7" font-size="5.9" fill="#dedede" text-anchor="start" font-weight="bold" textLength="64.1" lengthAdjust="spacingAndGlyphs" >Dab Production: $2.00M</text>
<rect x="815" y="290.9" width="11.6" height="11.6" fill="#2e2e2e" />
<rect x="816.2" y="292" width="9.2" height="9.2" fill="#0b9994" />
<rect x="827.3" y="290.9" width="81.6" height="11.6" fill="#2f2f2f" />
<text x="830.3" y="298.7" font-size="5.9" fill="#dedede" text-anchor="start" font-weight="bold" textLength="75.2" lengthAdjust="spacingAndGlyphs" >Duckbill Production: $5.10M</text>
<rect x="910.4" y="290.9" width="11.6" height="11.6" fill="#2e2e2e" />
<rect x="911.6" y="292" width="9.2" height="9.2" fill="#ff69b4" />
<rect x="922.8" y="290.9" width="76.6" height="11.6" fill="#2f2f2f" />
<text x="925.8" y="298.7" font-size="5.9" fill="#dedede" text-anchor="start" font-weight="bold" textLength="70.2" lengthAdjust="spacingAndGlyphs" >3.0 V6 Production: $2.10M</text>
<rect x="730" y="304.2" width="11.6" height="11.6" fill="#2e2e2e" />
<rect x="731.2" y="305.3" width="9.2" height="9.2" fill="#ffb3e0" />
<rect x="742.9" y="304.2" width="75.5" height="11.6" fill="#2f2f2f" />
<text x="745.9" y="312" font-size="5.9" fill="#dedede" text-anchor="start" font-weight="bold" textLength="69.1" lengthAdjust="spacingAndGlyphs" >4.6 V6 Production: $1.30M</text>
<rect x="820" y="304.2" width="11.6" height="11.6" fill="#2e2e2e" />
<rect x="821.2" y="305.3" width="9.2" height="9.2" fill="#4a00a2" />
<rect x="832.6" y="304.2" width="79.7" height="11.6" fill="#2f2f2f" />
<text x="835.6" y="312" font-size="5.9" fill="#dedede" text-anchor="start" font-weight="bold" textLength="73.3" lengthAdjust="spacingAndGlyphs" >Racoon Production: $4.90M</text>
<rect x="730" y="317.6" width="11.6" height="11.6" fill="#2e2e2e" />
<rect x="731.2" y="318.7" width="9.2" height="9.2" fill="#07544e" />
<rect x="742.9" y="317.6" width="95.5" height="11.6" fill="#2f2f2f" />
<text x="745.9" y="325.4" font-size="5.9" fill="#dedede" text-anchor="start" font-weight="bold" textLength="89.1" lengthAdjust="spacingAndGlyphs" >Headquarters Level Cost : $2.00M</text>
<rect x="840.6" y="317.6" width="11.6" height="11.6" fill="#2e2e2e" />
<rect x="841.8" y="318.7" width="9.2" height="9.2" fill="#0b9994" />
<rect x="853" y="317.6" width="100.5" height="11.6" fill="#2f2f2f" />
<text x="856" y="325.4" font-size="5.9" fill="#dedede" text-anchor="start" font-weight="bold" textLength="94.1" lengthAdjust="spacingAndGlyphs" >Headquarters Addon Cost : $2.90M</text>
<rect x="730" y="330.9" width="11.6" height="11.6" fill="#2e2e2e" />
<rect x="731.2" y="332" width="9.2" height="9.2" fill="#ff69b4" />
<rect x="742.9" y="330.9" width="78.5" height="11.6" fill="#2f2f2f" />
<text x="745.9" y="338.7" font-size="5.9" fill="#dedede" text-anchor="start" font-weight="bold" textLength="72.1" lengthAdjust="spacingAndGlyphs" >Returned Deposits: $2.40M</text>
<rect x="823" y="330.9" width="11.6" height="11.6" fill="#2e2e2e" />
<rect x="824.2" y="332" width="9.2" height="9.2" fill="#a8a838" />
<rect x="835.8" y="330.9" width="49.9" height="11.6" fill="#2f2f2f" />
<text x="838.8" y="338.7" font-size="5.9" fill="#dedede" text-anchor="start" font-weight="bold" textLength="43.5" lengthAdjust="spacingAndGlyphs" >Research: $560k</text>
<rect x="887" y="330.9" width="11.6" height="11.6" fill="#2e2e2e" />
<rect x="888.2" y="332" width="9.2" height="9.2" fill="#f7e27a" />
<rect x="899.6" y="330.9" width="73.6" height="11.6" fill="#2f2f2f" />
<text x="902.6" y="338.7" font-size="5.9" fill="#dedede" text-anchor="start" font-weight="bold" textLength="67.2" lengthAdjust="spacingAndGlyphs" >Loan Repayment: $6.80M</text>
<rect x="730" y="344.2" width="11.6" height="11.6" fill="#2e2e2e" />
<rect x="731.2" y="345.3" width="9.2" height="9.2" fill="#ffa9c0" />
<rect x="742.9" y="344.2" width="56.4" height="11.6" fill="#2f2f2f" />
<text x="745.9" y="352" font-size="5.9" fill="#dedede" text-anchor="start" font-weight="bold" textLength="50" lengthAdjust="spacingAndGlyphs" >Marketing: $5.50M</text>
<rect x="284.5" y="500" width="37.8" height="37" fill="#973a3a" />
<text x="293.2" y="531.2" font-size="34.5" fill="#fff" text-anchor="start" font-weight="bold" textLength="19.6" lengthAdjust="spacingAndGlyphs" >$</text>
<rect x="327.6" y="499.2" width="156.6" height="38.3" fill="#575757" />
<text x="333.2" y="523.8" font-size="15.3" fill="#f2f2f2" text-anchor="start" font-weight="normal" textLength="144.3" lengthAdjust="spacingAndGlyphs" >Revenue &amp; Expenses</text>
<rect x="495.3" y="500" width="37.8" height="37" fill="#502222" />
<g fill="none" stroke="#f3e9e9" stroke-width="1.7" stroke-linejoin="miter"><path d="M504 531.3V513.6L514 507.8L524 513.6V531.3"/><path d="M502.2 514.4L514 507.6L525.8 514.4" stroke-width="1.9"/><circle cx="514" cy="521.8" r="6.6"/></g>
<text x="514" y="525.2" font-size="9.5" fill="#f3e9e9" text-anchor="middle" font-weight="bold" >$</text>
<rect x="538.5" y="499.2" width="52.5" height="38.3" fill="#3a3a3a" />
<text x="544" y="523.8" font-size="15.3" fill="#f2f2f2" text-anchor="start" font-weight="normal" textLength="40.2" lengthAdjust="spacingAndGlyphs" >Loans</text>
<rect x="602.3" y="500" width="37.8" height="37" fill="#502222" />
<g fill="none" stroke="#f3e9e9" stroke-width="1.7"><rect x="608.2" y="509" width="25" height="22.4" rx="3"/><path d="M613.4 506.6v3.4M628 506.6v3.4" stroke-width="2.6" stroke-linecap="round"/></g>
<g fill="#f3e9e9"><rect x="615.5" y="512.6" width="2.7" height="2.9"/><rect x="619.4" y="512.6" width="2.7" height="2.9"/><rect x="611.6" y="516.9" width="2.7" height="2.9"/><rect x="615.5" y="516.9" width="2.7" height="2.9"/><rect x="619.4" y="516.9" width="2.7" height="2.9"/><rect x="611.6" y="521.2" width="2.7" height="2.9"/><rect x="615.5" y="521.2" width="2.7" height="2.9"/><rect x="619.4" y="521.2" width="2.7" height="2.9"/><rect x="611.6" y="525.5" width="2.7" height="2.9"/><rect x="615.5" y="525.5" width="2.7" height="2.9"/><rect x="619.4" y="525.5" width="2.7" height="2.9"/><rect x="623.300" y="512.6" width="2.7" height="2.9"/><rect x="627.2" y="512.6" width="2.7" height="2.9"/></g>
<text x="626.8" y="528.2" font-size="10.5" fill="#f3e9e9" text-anchor="middle" font-weight="bold" >$</text>
<rect x="645" y="499.2" width="101.2" height="38.3" fill="#3a3a3a" />
<text x="650.6" y="523.8" font-size="15.3" fill="#f2f2f2" text-anchor="start" font-weight="normal" textLength="88.4" lengthAdjust="spacingAndGlyphs" >Transactions</text>
<rect x="233.8" y="552.3" width="37.8" height="18.1" fill="#552424" />
<rect x="277.5" y="552.3" width="37.8" height="18.1" fill="#552424" />
<rect x="332" y="552.3" width="37.8" height="18.1" fill="#552424" />
<rect x="375.9" y="552.3" width="37.8" height="18.1" fill="#552424" />
<rect x="419.6" y="552.3" width="37.8" height="18.1" fill="#552424" />
<rect x="474" y="552.3" width="37.8" height="18.1" fill="#9a3a3a" />
<rect x="517.8" y="552.3" width="37.8" height="18.1" fill="#552424" />
<rect x="561.2" y="552.3" width="37.8" height="18.1" fill="#552424" />
<rect x="605.4" y="552.3" width="37.8" height="18.1" fill="#552424" />
<rect x="649.1" y="552.3" width="37.8" height="18.1" fill="#552424" />
<rect x="692.9" y="552.3" width="37.8" height="18.1" fill="#552424" />
<rect x="747.5" y="552.3" width="37.8" height="18.1" fill="#552424" />
<g transform="translate(252.7,561.9) scale(0.92)" fill="#f4ecec" stroke="none"><path d="M0 -5.2L5.4 -0.4H4V4.6H1.2V1.400H-1.2V4.6H-4V-0.4H-5.4Z"/></g>
<g transform="translate(296.4,561.9) scale(0.92)" fill="#f4ecec" stroke="none"><circle cx="0" cy="1.800" r="5" fill="none" stroke="#f4ecec" stroke-width="1"/><path d="M-5 1.800H5M-4.200 -0.600H4.200M-4.200 4.200H4.200M0 -3.200V6.800M-2.400 -2.400C-3.400 0.400 -3.400 3.200 -2.400 6M2.400 -2.400C3.400 0.400 3.400 3.200 2.400 6" fill="none" stroke="#f4ecec" stroke-width="0.700"/><path d="M-3.400 -2.400V-5H-1.400V-7H1.200V-5.600H3.200V-2.400" fill="none" stroke="#f4ecec" stroke-width="1.100"/></g>
<g transform="translate(350.9,561.9) scale(0.92)" fill="#f4ecec" stroke="none"><path d="M-8 1L-6.600 -0.800L-5 -4.800Q-4.600 -5.800 -3.400 -5.800H3.400Q4.600 -5.800 5 -4.800L6.600 -0.800L8 1V4.600H6.800V6H4V4.600H-4V6H-6.800V4.600H-8Z"/><path d="M-4.400 -4.400H4.400L5.400 -1H-5.400Z" fill="#552424"/><rect x="-6.800" y="0.800" width="2.600" height="1.500" fill="#552424"/><rect x="4.200" y="0.800" width="2.600" height="1.500" fill="#552424"/></g>
<g transform="translate(394.8,561.9) scale(0.92)" fill="#f4ecec" stroke="none"><g fill="#f4ecec" stroke="#f4ecec" stroke-width="0.800" stroke-linejoin="round"><path d="M-7 -3L-4 -6.200L-1 -3.200L-4 0Z"/><path d="M7 -3L4 -6.200L1 -3.200L4 0Z"/></g><circle cx="0" cy="2.800" r="2.900" fill="none" stroke="#f4ecec" stroke-width="1.800"/><path d="M-2.400 -1.600L0 0.800L2.400 -1.600" fill="none" stroke="#f4ecec" stroke-width="1.400"/></g>
<g transform="translate(438.5,561.9) scale(0.92)" fill="#f4ecec" stroke="none"><path d="M-7.600 6.400V-7H-5.800V0.200L-2 -2V0.200L1.800 -2V0.200L5.600 -2V0.200L7.600 -1V6.400Z"/><g fill="#552424"><rect x="-5.200" y="2.400" width="1.500" height="1.500"/><rect x="-2.200" y="2.400" width="1.500" height="1.500"/><rect x="0.800" y="2.400" width="1.500" height="1.500"/><rect x="3.800" y="2.400" width="1.500" height="1.500"/></g></g>
<text x="492.9" y="567.6" font-size="16.5" fill="#fff" text-anchor="middle" font-weight="normal" >$</text>
<g transform="translate(536.7,561.9) scale(0.92)" fill="#f4ecec" stroke="none"><circle cx="-4.200" cy="-2.800" r="1.900"/><circle cx="4.200" cy="-2.800" r="1.900"/><circle cx="0" cy="-3.800" r="2.100"/><path d="M-7 4.800V1.400Q-7 -0.400 -4.200 -0.400Q-2.400 -0.400 -2 0.400Q-1 -1.200 0 -1.200Q1 -1.200 2 0.400Q2.400 -0.400 4.200 -0.400Q7 -0.400 7 1.400V4.800Z"/></g>
<g transform="translate(580.1,561.9) scale(0.92)" fill="#f4ecec" stroke="none"><circle cx="0" cy="0" r="5.400" fill="none" stroke="#f4ecec" stroke-width="1.300"/><path d="M0 -7.400V-4.200M0 7.400V4.200M-7.400 0H-4.200M7.400 0H4.200" stroke="#f4ecec" stroke-width="1.200" fill="none"/><circle cx="0" cy="-1.600" r="1.400"/><path d="M-2 3.400Q-2 0.400 0 0.400Q2 0.400 2 3.400Z"/></g>
<g transform="translate(624.3,561.9) scale(0.92)" fill="#f4ecec" stroke="none"><g fill="none" stroke="#f4ecec" stroke-width="1.200"><path d="M-4.400 -4.400H3.600M-6.600 0H-1.400M1.400 0H6.600M-6.600 4.400H3.400"/><circle cx="-5.600" cy="-4.400" r="1.300"/><circle cx="4.800" cy="-4.400" r="1.300"/><circle cx="0" cy="0" r="1.300"/><circle cx="4.800" cy="4.400" r="1.300"/></g></g>
<g transform="translate(668.0,561.9) scale(0.92)" fill="#f4ecec" stroke="none"><g fill="none" stroke="#f4ecec" stroke-width="1.100"><path d="M0 -5V4.400M-4.800 -3.600H4.800M-3.200 5H3.200"/><path d="M-6.400 1.200L-4.600 -3.400L-2.800 1.200Z M2.800 1.200L4.600 -3.400L6.400 1.200Z" stroke-width="0.900"/></g><path d="M-6.600 1.200H-2.600Q-4.600 3.400 -6.600 1.200Z M2.600 1.200H6.600Q4.600 3.400 2.600 1.200Z"/></g>
<g transform="translate(711.8,561.9) scale(0.92)" fill="#f4ecec" stroke="none"><g fill="none" stroke="#f4ecec" stroke-width="1.200"><path d="M-4.600 6V-3.200L-1.800 -1.200L0 -3.200L1.800 -1.200L4.600 -3.200V6"/><path d="M-5.800 -2.200L5.800 -6.200"/><circle cx="0" cy="2.400" r="2.700"/></g></g>
<g transform="translate(766.4,561.9) scale(0.92)" fill="#f4ecec" stroke="none"><path d="M0 -6.200L6.200 -1.600V5.400H4.200V-0.600H-4.200V5.400H-6.200V-1.600Z"/><path d="M-3.200 5.400V2.600Q-3.200 0.600 0 0.600Q3.200 0.600 3.200 2.600V5.400Z"/></g>
</svg>
</body></html>
